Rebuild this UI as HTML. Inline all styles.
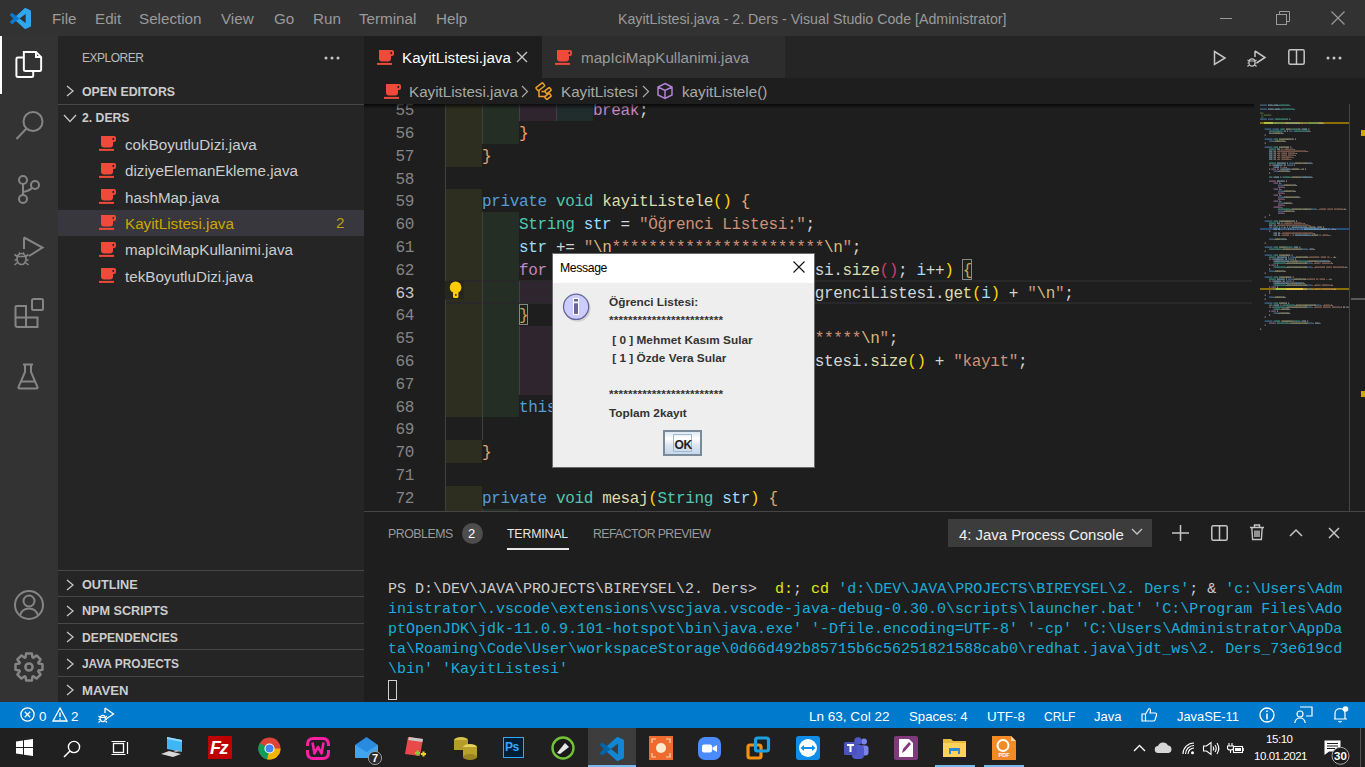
<!DOCTYPE html><html><head><meta charset="utf-8"><style>
*{margin:0;padding:0;box-sizing:border-box}
html,body{width:1365px;height:767px;overflow:hidden;background:#1e1e1e;font-family:"Liberation Sans",sans-serif}
.a{position:absolute}
.t{position:absolute;white-space:pre;line-height:1}
svg{position:absolute;overflow:visible}
.m{color:#9a9a9a;font-size:15.2px;top:11px}
.code{position:absolute;font-family:"Liberation Mono",monospace;font-size:16px;letter-spacing:-0.36px;white-space:pre;line-height:22.8px;color:#d4d4d4}
.ln{position:absolute;font-family:"Liberation Mono",monospace;font-size:16px;letter-spacing:-0.36px;white-space:pre;line-height:22.8px;color:#858585;text-align:right;width:50px;left:364px}
.fn{font-size:15.2px;color:#cccccc}
.hd{font-size:13.4px;font-weight:bold;color:#cccccc;transform-origin:0 0}
</style></head><body><div class="a" style="left:0;top:0;width:1365px;height:36px;background:#323232"><svg style="left:10px;top:8px" width="21" height="21" viewBox="0 0 100 100">
<path fill="#0a7bd0" d="M96.5 10.8 75.9.9a6.2 6.2 0 0 0-7.1 1.2L29.4 38 12.2 25a4.2 4.2 0 0 0-5.3.2L1.4 30.2a4.2 4.2 0 0 0 0 6.2L16.3 50 1.4 63.6a4.2 4.2 0 0 0 0 6.2l5.5 5a4.2 4.2 0 0 0 5.3.2l17.2-13 39.4 35.9a6.2 6.2 0 0 0 7.1 1.2l20.6-9.9a6.2 6.2 0 0 0 3.5-5.6V16.4a6.2 6.2 0 0 0-3.5-5.6zM75 72.7 45.1 50 75 27.3z"/>
<path fill="#3cb4f8" d="M75.9.9a6.2 6.2 0 0 0-7.1 1.2L29.4 38 45.1 50 75 27.3v45.4L45.1 50 29.4 62l39.4 35.9a6.2 6.2 0 0 0 7.1 1.2l20.6-9.9a6.2 6.2 0 0 0 3.5-5.6V16.4a6.2 6.2 0 0 0-3.5-5.6z" opacity=".75"/>
</svg><div class="t m" style="left:52px">File</div><div class="t m" style="left:95px">Edit</div><div class="t m" style="left:139px">Selection</div><div class="t m" style="left:221px">View</div><div class="t m" style="left:274px">Go</div><div class="t m" style="left:313px">Run</div><div class="t m" style="left:359px">Terminal</div><div class="t m" style="left:436px">Help</div><div class="t m" style="left:618px;font-size:14.2px;top:12px">KayitListesi.java - 2. Ders - Visual Studio Code [Administrator]</div><div class="a" style="left:1220px;top:18px;width:12px;height:1px;background:#9a9a9a"></div><svg style="left:1276px;top:11px" width="14" height="14"><rect x="0.5" y="3.5" width="10" height="10" fill="none" stroke="#9a9a9a"/><path d="M3.5 3.5V0.5H13.5V10.5H10.5" fill="none" stroke="#9a9a9a"/></svg><svg style="left:1331px;top:11px" width="14" height="14"><path d="M0.5 0.5L13.5 13.5M13.5 0.5L0.5 13.5" stroke="#9a9a9a" stroke-width="1.2"/></svg></div><div class="a" style="left:0;top:36px;width:58px;height:666px;background:#333333"></div><div class="a" style="left:0;top:36px;width:2px;height:58px;background:#ffffff"></div><svg style="left:15px;top:50px" width="28" height="29" viewBox="0 0 30 30" fill="none" stroke="#ffffff" stroke-width="2.1">
<rect x="1.5" y="7.5" width="18" height="21" rx="1.5"/>
<path d="M9.5 1.5H22.5L28 7V20.5Q28 22 26.5 22H11Q9.5 22 9.5 20.5Z" fill="#333333"/>
<path d="M22.5 1.5V7H28"/>
</svg><svg style="left:14px;top:108px" width="30" height="30" viewBox="0 0 30 30" fill="none" stroke="#858585" stroke-width="2">
<circle cx="19" cy="13.5" r="9.5"/><path d="M12.5 20.5L2.5 31"/>
</svg><svg style="left:14px;top:166px" width="30" height="30" viewBox="0 0 30 30" fill="none" stroke="#858585" stroke-width="2">
<circle cx="9" cy="14" r="4"/><circle cx="9" cy="33" r="4"/><circle cx="21" cy="19" r="4"/>
<path d="M9 18V29M18 22Q15 25 9 26"/>
</svg><svg style="left:14px;top:236px" width="30" height="30" viewBox="0 0 30 30" fill="none" stroke="#858585" stroke-width="2">
<path d="M10 1.5L28.5 11.5L15 20M10 1.5V13"/>
<g stroke-width="1.6"><ellipse cx="7.5" cy="23" rx="4.5" ry="5.5" fill="#333"/><path d="M3.5 20.5H11.5M0.5 18.5L3.5 20.5M14.5 18.5L11.5 20.5M0.5 24H3M12 24H14.5M0.5 29L3.5 26.5M14.5 29L11.5 26.5M5 16.5L6 18M10 16.5L9 18"/></g>
</svg><svg style="left:14px;top:298px" width="30" height="30" viewBox="0 0 30 30" fill="none" stroke="#858585" stroke-width="2">
<path d="M2.5 8H12V19.5H23.5V29H3.5Q1.5 29 1.5 27V9Q1.5 8 2.5 8ZM1.5 19.5H12V29"/>
<rect x="18" y="1" width="11" height="11" rx="1.5"/>
</svg><svg style="left:14px;top:362px" width="30" height="30" viewBox="0 0 30 30" fill="none" stroke="#858585" stroke-width="2">
<path d="M9 2.5H19M11 2.5V10L4.5 25Q4 26.5 5.5 26.5H22.5Q24 26.5 23.5 25L17 10V2.5M7.5 19.5H20.5"/>
</svg><svg style="left:14px;top:590px" width="30" height="30" viewBox="0 0 30 30" fill="none" stroke="#858585" stroke-width="2">
<circle cx="15" cy="15" r="14"/><circle cx="15" cy="11" r="5.5"/><path d="M6 25.5Q8 18.5 15 18.5Q22 18.5 24 25.5"/>
</svg><svg style="left:14px;top:652px" width="30" height="30" viewBox="0 0 30 30" fill="none" stroke="#858585" stroke-width="2.5">
<path d="M11.10 5.58L11.51 5.42L12.13 1.50L17.87 1.50L18.49 5.42L18.90 5.58L19.31 5.76L22.52 3.43L26.57 7.48L24.24 10.69L24.42 11.10L24.58 11.51L28.50 12.13L28.50 17.87L24.58 18.49L24.42 18.90L24.24 19.31L26.57 22.52L22.52 26.57L19.31 24.24L18.90 24.42L18.49 24.58L17.87 28.50L12.13 28.50L11.51 24.58L11.10 24.42L10.69 24.24L7.48 26.57L3.43 22.52L5.76 19.31L5.58 18.90L5.42 18.49L1.50 17.87L1.50 12.13L5.42 11.51L5.58 11.10L5.76 10.69L3.43 7.48L7.48 3.43L10.69 5.76Z" stroke-linejoin="round"/>
<circle cx="15" cy="15" r="3.6"/>
</svg><div class="a" style="left:58px;top:36px;width:306px;height:666px;background:#252526"></div><div class="t" style="left:82px;top:52px;font-size:12px;color:#bbbbbb;letter-spacing:-0.5px">EXPLORER</div><svg style="left:324px;top:56px" width="18" height="4"><circle cx="2" cy="2" r="1.5" fill="#c5c5c5"/><circle cx="8" cy="2" r="1.5" fill="#c5c5c5"/><circle cx="14" cy="2" r="1.5" fill="#c5c5c5"/></svg><svg style="left:65px;top:83.5px" width="12" height="14"><path d="M2 2L8 7L2 12" fill="none" stroke="#c5c5c5" stroke-width="1.3"/></svg><div class="t hd" style="left:82px;top:84.5px;transform:scaleX(0.922)">OPEN EDITORS</div><div class="a" style="left:58px;top:104px;width:306px;height:1px;background:#474747"></div><svg style="left:63px;top:113px" width="14" height="12"><path d="M1 2L7 8.5L13 2" fill="none" stroke="#c5c5c5" stroke-width="1.3"/></svg><div class="t hd" style="left:82px;top:111px;transform:scaleX(0.912)">2. DERS</div><svg style="left:99px;top:136.1px" width="17" height="15" viewBox="0 0 17 15"><path fill="#ef4a3a" d="M2 0H14V8.6Q14 11.6 11 11.6H5Q2 11.6 2 8.6Z"/><path fill="#ef4a3a" d="M13 0H15Q17 0 17 2V4Q17 6 15 6H13Z"/><ellipse cx="14.3" cy="3" rx="0.9" ry="1.3" fill="#252526"/><rect x="0" y="12.9" width="15" height="2" fill="#ef4a3a"/></svg><div class="t fn" style="left:125px;top:136.8px">cokBoyutluDizi.java</div><svg style="left:99px;top:162.5px" width="17" height="15" viewBox="0 0 17 15"><path fill="#ef4a3a" d="M2 0H14V8.6Q14 11.6 11 11.6H5Q2 11.6 2 8.6Z"/><path fill="#ef4a3a" d="M13 0H15Q17 0 17 2V4Q17 6 15 6H13Z"/><ellipse cx="14.3" cy="3" rx="0.9" ry="1.3" fill="#252526"/><rect x="0" y="12.9" width="15" height="2" fill="#ef4a3a"/></svg><div class="t fn" style="left:125px;top:163.2px">diziyeElemanEkleme.java</div><svg style="left:99px;top:188.9px" width="17" height="15" viewBox="0 0 17 15"><path fill="#ef4a3a" d="M2 0H14V8.6Q14 11.6 11 11.6H5Q2 11.6 2 8.6Z"/><path fill="#ef4a3a" d="M13 0H15Q17 0 17 2V4Q17 6 15 6H13Z"/><ellipse cx="14.3" cy="3" rx="0.9" ry="1.3" fill="#252526"/><rect x="0" y="12.9" width="15" height="2" fill="#ef4a3a"/></svg><div class="t fn" style="left:125px;top:189.6px">hashMap.java</div><div class="a" style="left:58px;top:210.0px;width:306px;height:26.4px;background:#37373d"></div><svg style="left:99px;top:215.3px" width="17" height="15" viewBox="0 0 17 15"><path fill="#ef4a3a" d="M2 0H14V8.6Q14 11.6 11 11.6H5Q2 11.6 2 8.6Z"/><path fill="#ef4a3a" d="M13 0H15Q17 0 17 2V4Q17 6 15 6H13Z"/><ellipse cx="14.3" cy="3" rx="0.9" ry="1.3" fill="#37373d"/><rect x="0" y="12.9" width="15" height="2" fill="#ef4a3a"/></svg><div class="t fn" style="left:125px;top:216.0px;color:#cca700">KayitListesi.java</div><div class="t fn" style="left:336px;top:215.0px;color:#c09e10">2</div><svg style="left:99px;top:241.7px" width="17" height="15" viewBox="0 0 17 15"><path fill="#ef4a3a" d="M2 0H14V8.6Q14 11.6 11 11.6H5Q2 11.6 2 8.6Z"/><path fill="#ef4a3a" d="M13 0H15Q17 0 17 2V4Q17 6 15 6H13Z"/><ellipse cx="14.3" cy="3" rx="0.9" ry="1.3" fill="#252526"/><rect x="0" y="12.9" width="15" height="2" fill="#ef4a3a"/></svg><div class="t fn" style="left:125px;top:242.4px">mapIciMapKullanimi.java</div><svg style="left:99px;top:268.1px" width="17" height="15" viewBox="0 0 17 15"><path fill="#ef4a3a" d="M2 0H14V8.6Q14 11.6 11 11.6H5Q2 11.6 2 8.6Z"/><path fill="#ef4a3a" d="M13 0H15Q17 0 17 2V4Q17 6 15 6H13Z"/><ellipse cx="14.3" cy="3" rx="0.9" ry="1.3" fill="#252526"/><rect x="0" y="12.9" width="15" height="2" fill="#ef4a3a"/></svg><div class="t fn" style="left:125px;top:268.8px">tekBoyutluDizi.java</div><div class="a" style="left:58px;top:570.0px;width:306px;height:1px;background:#474747"></div><svg style="left:65px;top:577.5px" width="12" height="14"><path d="M2 2L8 7L2 12" fill="none" stroke="#c5c5c5" stroke-width="1.3"/></svg><div class="t hd" style="left:82px;top:578.0px;transform:scaleX(0.947)">OUTLINE</div><div class="a" style="left:58px;top:596.4px;width:306px;height:1px;background:#474747"></div><svg style="left:65px;top:603.9px" width="12" height="14"><path d="M2 2L8 7L2 12" fill="none" stroke="#c5c5c5" stroke-width="1.3"/></svg><div class="t hd" style="left:82px;top:604.4px;transform:scaleX(0.943)">NPM SCRIPTS</div><div class="a" style="left:58px;top:622.8px;width:306px;height:1px;background:#474747"></div><svg style="left:65px;top:630.3px" width="12" height="14"><path d="M2 2L8 7L2 12" fill="none" stroke="#c5c5c5" stroke-width="1.3"/></svg><div class="t hd" style="left:82px;top:630.8px;transform:scaleX(0.908)">DEPENDENCIES</div><div class="a" style="left:58px;top:649.2px;width:306px;height:1px;background:#474747"></div><svg style="left:65px;top:656.7px" width="12" height="14"><path d="M2 2L8 7L2 12" fill="none" stroke="#c5c5c5" stroke-width="1.3"/></svg><div class="t hd" style="left:82px;top:657.2px;transform:scaleX(0.888)">JAVA PROJECTS</div><div class="a" style="left:58px;top:675.6px;width:306px;height:1px;background:#474747"></div><svg style="left:65px;top:683.1px" width="12" height="14"><path d="M2 2L8 7L2 12" fill="none" stroke="#c5c5c5" stroke-width="1.3"/></svg><div class="t hd" style="left:82px;top:683.6px;transform:scaleX(0.981)">MAVEN</div><div class="a" style="left:364px;top:36px;width:1001px;height:42px;background:#252526"></div><div class="a" style="left:364px;top:36px;width:178px;height:42px;background:#1e1e1e"></div><div class="a" style="left:542px;top:36px;width:243px;height:42px;background:#2d2d2d"></div><svg style="left:377px;top:50px" width="17" height="15" viewBox="0 0 17 15"><path fill="#ef4a3a" d="M2 0H14V8.6Q14 11.6 11 11.6H5Q2 11.6 2 8.6Z"/><path fill="#ef4a3a" d="M13 0H15Q17 0 17 2V4Q17 6 15 6H13Z"/><ellipse cx="14.3" cy="3" rx="0.9" ry="1.3" fill="#1e1e1e"/><rect x="0" y="12.9" width="15" height="2" fill="#ef4a3a"/></svg><div class="t fn" style="left:402px;top:50px;color:#ffffff">KayitListesi.java</div><svg style="left:516px;top:51px" width="12" height="12"><path d="M1 1L11 11M11 1L1 11" stroke="#c5c5c5" stroke-width="1.4"/></svg><svg style="left:555px;top:50px" width="17" height="15" viewBox="0 0 17 15"><path fill="#ef4a3a" d="M2 0H14V8.6Q14 11.6 11 11.6H5Q2 11.6 2 8.6Z"/><path fill="#ef4a3a" d="M13 0H15Q17 0 17 2V4Q17 6 15 6H13Z"/><ellipse cx="14.3" cy="3" rx="0.9" ry="1.3" fill="#2d2d2d"/><rect x="0" y="12.9" width="15" height="2" fill="#ef4a3a"/></svg><div class="t fn" style="left:581px;top:50px;color:#9a9a9a">mapIciMapKullanimi.java</div><svg style="left:1213px;top:50px" width="14" height="16"><path d="M1.5 1.5L12 8L1.5 14.5Z" fill="none" stroke="#c5c5c5" stroke-width="1.5"/></svg><svg style="left:1247px;top:50px" width="20" height="18"><path d="M8 1L18 7.5L9.5 13M8 1V7" fill="none" stroke="#c5c5c5" stroke-width="1.5"/><g fill="none" stroke="#c5c5c5" stroke-width="1.2"><ellipse cx="5" cy="12.5" rx="3" ry="3.6" fill="#252526"/><path d="M2.2 11H7.8M0.5 10L2.2 11M9.5 10L7.8 11M0.5 13H2M8 13H9.5M0.5 16.5L2.2 14.8M9.5 16.5L7.8 14.8"/></g></svg><svg style="left:1288px;top:49px" width="17" height="16"><rect x="0.8" y="0.8" width="15.4" height="14.4" rx="1.5" fill="none" stroke="#c5c5c5" stroke-width="1.5"/><path d="M8.5 1V15" stroke="#c5c5c5" stroke-width="1.5"/></svg><svg style="left:1326px;top:56px" width="18" height="4"><circle cx="2" cy="2" r="1.5" fill="#c5c5c5"/><circle cx="8" cy="2" r="1.5" fill="#c5c5c5"/><circle cx="14" cy="2" r="1.5" fill="#c5c5c5"/></svg><div class="a" style="left:364px;top:78px;width:1001px;height:26.4px;background:#1e1e1e"></div><svg style="left:384px;top:84px" width="17" height="15" viewBox="0 0 17 15"><path fill="#ef4a3a" d="M2 0H14V8.6Q14 11.6 11 11.6H5Q2 11.6 2 8.6Z"/><path fill="#ef4a3a" d="M13 0H15Q17 0 17 2V4Q17 6 15 6H13Z"/><ellipse cx="14.3" cy="3" rx="0.9" ry="1.3" fill="#1e1e1e"/><rect x="0" y="12.9" width="15" height="2" fill="#ef4a3a"/></svg><div class="t fn" style="left:409px;top:84px;color:#a9a9a9">KayitListesi.java</div><svg style="left:521px;top:85px" width="8" height="13"><path d="M1 1L6.5 6.5L1 12" fill="none" stroke="#a9a9a9" stroke-width="1.2"/></svg><svg style="left:534px;top:82px" width="19" height="19" viewBox="0 0 19 19" fill="none" stroke="#ee9d28" stroke-width="1.5"><rect x="2" y="2.8" width="8.6" height="4" rx="0.8" transform="rotate(-38 6.3 4.8)"/><rect x="11" y="6.8" width="6" height="3.6" rx="0.8" transform="rotate(-38 14 8.6)"/><rect x="11" y="12.6" width="6" height="3.6" rx="0.8" transform="rotate(-38 14 14.4)"/><path d="M5 7.5V14.5H11.5M7.5 9.5H11.5"/></svg><div class="t fn" style="left:561px;top:84px;color:#a9a9a9">KayitListesi</div><svg style="left:642px;top:85px" width="8" height="13"><path d="M1 1L6.5 6.5L1 12" fill="none" stroke="#a9a9a9" stroke-width="1.2"/></svg><svg style="left:656px;top:82px" width="18" height="18" viewBox="0 0 18 18" fill="none" stroke="#b180d7" stroke-width="1.5"><path d="M9 1.5L16 5V13L9 16.5L2 13V5Z M2 5L9 8.5L16 5 M9 8.5V16.5"/></svg><div class="t fn" style="left:682px;top:84px;color:#a9a9a9">kayitListele()</div><div class="a" style="left:364px;top:104px;width:1001px;height:408px;overflow:hidden"><div class="a" style="left:81.00px;top:-5.80px;width:36.96px;height:22.8px;background:#2e2e20"></div><div class="a" style="left:117.96px;top:-5.80px;width:36.96px;height:22.8px;background:#252e25"></div><div class="a" style="left:154.92px;top:-5.80px;width:36.96px;height:22.8px;background:#2e252e"></div><div class="a" style="left:191.88px;top:-5.80px;width:36.96px;height:22.8px;background:#212c2c"></div><div class="a" style="left:81.00px;top:17.00px;width:36.96px;height:22.8px;background:#2e2e20"></div><div class="a" style="left:117.96px;top:17.00px;width:36.96px;height:22.8px;background:#252e25"></div><div class="a" style="left:81.00px;top:39.80px;width:36.96px;height:22.8px;background:#2e2e20"></div><div class="a" style="left:81.00px;top:85.40px;width:36.96px;height:22.8px;background:#2e2e20"></div><div class="a" style="left:81.00px;top:108.20px;width:36.96px;height:22.8px;background:#2e2e20"></div><div class="a" style="left:117.96px;top:108.20px;width:36.96px;height:22.8px;background:#252e25"></div><div class="a" style="left:81.00px;top:131.00px;width:36.96px;height:22.8px;background:#2e2e20"></div><div class="a" style="left:117.96px;top:131.00px;width:36.96px;height:22.8px;background:#252e25"></div><div class="a" style="left:81.00px;top:153.80px;width:36.96px;height:22.8px;background:#2e2e20"></div><div class="a" style="left:117.96px;top:153.80px;width:36.96px;height:22.8px;background:#252e25"></div><div class="a" style="left:81.00px;top:176.60px;width:36.96px;height:22.8px;background:#2e2e20"></div><div class="a" style="left:117.96px;top:176.60px;width:36.96px;height:22.8px;background:#252e25"></div><div class="a" style="left:154.92px;top:176.60px;width:36.96px;height:22.8px;background:#2e252e"></div><div class="a" style="left:81.00px;top:199.40px;width:36.96px;height:22.8px;background:#2e2e20"></div><div class="a" style="left:117.96px;top:199.40px;width:36.96px;height:22.8px;background:#252e25"></div><div class="a" style="left:81.00px;top:222.20px;width:36.96px;height:22.8px;background:#2e2e20"></div><div class="a" style="left:117.96px;top:222.20px;width:36.96px;height:22.8px;background:#252e25"></div><div class="a" style="left:154.92px;top:222.20px;width:36.96px;height:22.8px;background:#2e252e"></div><div class="a" style="left:81.00px;top:245.00px;width:36.96px;height:22.8px;background:#2e2e20"></div><div class="a" style="left:117.96px;top:245.00px;width:36.96px;height:22.8px;background:#252e25"></div><div class="a" style="left:154.92px;top:245.00px;width:36.96px;height:22.8px;background:#2e252e"></div><div class="a" style="left:81.00px;top:267.80px;width:36.96px;height:22.8px;background:#2e2e20"></div><div class="a" style="left:117.96px;top:267.80px;width:36.96px;height:22.8px;background:#252e25"></div><div class="a" style="left:154.92px;top:267.80px;width:36.96px;height:22.8px;background:#2e252e"></div><div class="a" style="left:81.00px;top:290.60px;width:36.96px;height:22.8px;background:#2e2e20"></div><div class="a" style="left:117.96px;top:290.60px;width:36.96px;height:22.8px;background:#252e25"></div><div class="a" style="left:81.00px;top:336.20px;width:36.96px;height:22.8px;background:#2e2e20"></div><div class="a" style="left:81.00px;top:381.80px;width:36.96px;height:22.8px;background:#2e2e20"></div><div class="a" style="left:81.00px;top:404.60px;width:36.96px;height:22.8px;background:#2e2e20"></div><div class="a" style="left:117.96px;top:404.60px;width:36.96px;height:22.8px;background:#252e25"></div><div class="a" style="left:81px;top:175.60px;width:807px;height:24.8px;border-top:2px solid #282828;border-bottom:2px solid #282828"></div><div class="a" style="left:81.00px;top:-5.80px;width:1px;height:22.8px;background:#404040"></div><div class="a" style="left:117.96px;top:-5.80px;width:1px;height:22.8px;background:#404040"></div><div class="a" style="left:154.92px;top:-5.80px;width:1px;height:22.8px;background:#404040"></div><div class="a" style="left:191.88px;top:-5.80px;width:1px;height:22.8px;background:#404040"></div><div class="a" style="left:81.00px;top:17.00px;width:1px;height:22.8px;background:#404040"></div><div class="a" style="left:117.96px;top:17.00px;width:1px;height:22.8px;background:#404040"></div><div class="a" style="left:81.00px;top:39.80px;width:1px;height:22.8px;background:#404040"></div><div class="a" style="left:81.00px;top:62.60px;width:1px;height:22.8px;background:#404040"></div><div class="a" style="left:81.00px;top:85.40px;width:1px;height:22.8px;background:#404040"></div><div class="a" style="left:81.00px;top:108.20px;width:1px;height:22.8px;background:#404040"></div><div class="a" style="left:117.96px;top:108.20px;width:1px;height:22.8px;background:#404040"></div><div class="a" style="left:81.00px;top:131.00px;width:1px;height:22.8px;background:#404040"></div><div class="a" style="left:117.96px;top:131.00px;width:1px;height:22.8px;background:#404040"></div><div class="a" style="left:81.00px;top:153.80px;width:1px;height:22.8px;background:#404040"></div><div class="a" style="left:117.96px;top:153.80px;width:1px;height:22.8px;background:#404040"></div><div class="a" style="left:81.00px;top:176.60px;width:1px;height:22.8px;background:#404040"></div><div class="a" style="left:117.96px;top:176.60px;width:1px;height:22.8px;background:#404040"></div><div class="a" style="left:154.92px;top:176.60px;width:1px;height:22.8px;background:#404040"></div><div class="a" style="left:81.00px;top:199.40px;width:1px;height:22.8px;background:#404040"></div><div class="a" style="left:117.96px;top:199.40px;width:1px;height:22.8px;background:#404040"></div><div class="a" style="left:81.00px;top:222.20px;width:1px;height:22.8px;background:#404040"></div><div class="a" style="left:117.96px;top:222.20px;width:1px;height:22.8px;background:#404040"></div><div class="a" style="left:154.92px;top:222.20px;width:1px;height:22.8px;background:#404040"></div><div class="a" style="left:81.00px;top:245.00px;width:1px;height:22.8px;background:#404040"></div><div class="a" style="left:117.96px;top:245.00px;width:1px;height:22.8px;background:#404040"></div><div class="a" style="left:154.92px;top:245.00px;width:1px;height:22.8px;background:#404040"></div><div class="a" style="left:81.00px;top:267.80px;width:1px;height:22.8px;background:#404040"></div><div class="a" style="left:117.96px;top:267.80px;width:1px;height:22.8px;background:#404040"></div><div class="a" style="left:154.92px;top:267.80px;width:1px;height:22.8px;background:#404040"></div><div class="a" style="left:81.00px;top:290.60px;width:1px;height:22.8px;background:#404040"></div><div class="a" style="left:117.96px;top:290.60px;width:1px;height:22.8px;background:#404040"></div><div class="a" style="left:81.00px;top:313.40px;width:1px;height:22.8px;background:#404040"></div><div class="a" style="left:117.96px;top:313.40px;width:1px;height:22.8px;background:#404040"></div><div class="a" style="left:81.00px;top:336.20px;width:1px;height:22.8px;background:#404040"></div><div class="a" style="left:81.00px;top:359.00px;width:1px;height:22.8px;background:#404040"></div><div class="a" style="left:81.00px;top:381.80px;width:1px;height:22.8px;background:#404040"></div><div class="a" style="left:81.00px;top:404.60px;width:1px;height:22.8px;background:#404040"></div><div class="a" style="left:117.96px;top:404.60px;width:1px;height:22.8px;background:#404040"></div><div class="ln" style="left:0px;top:-3.80px;color:#858585">55</div><div class="code" style="left:81px;top:-3.80px"><span style="color:#d4d4d4">                </span><span style="color:#c586c0">break</span><span style="color:#d4d4d4">;</span></div><div class="ln" style="left:0px;top:19.00px;color:#858585">56</div><div class="code" style="left:81px;top:19.00px"><span style="color:#d4d4d4">        </span><span style="color:#e8a56a">}</span></div><div class="ln" style="left:0px;top:41.80px;color:#858585">57</div><div class="code" style="left:81px;top:41.80px"><span style="color:#d4d4d4">    </span><span style="color:#e8a56a">}</span></div><div class="ln" style="left:0px;top:64.60px;color:#858585">58</div><div class="ln" style="left:0px;top:87.40px;color:#858585">59</div><div class="code" style="left:81px;top:87.40px"><span style="color:#d4d4d4">    </span><span style="color:#569cd6">private</span><span style="color:#d4d4d4"> </span><span style="color:#4ec9b0">void</span><span style="color:#d4d4d4"> </span><span style="color:#dcdcaa">kayitListele</span><span style="color:#ffd700">()</span><span style="color:#d4d4d4"> </span><span style="color:#e8a56a">{</span></div><div class="ln" style="left:0px;top:110.20px;color:#858585">60</div><div class="code" style="left:81px;top:110.20px"><span style="color:#d4d4d4">        </span><span style="color:#4ec9b0">String</span><span style="color:#d4d4d4"> </span><span style="color:#9cdcfe">str</span><span style="color:#d4d4d4"> = </span><span style="color:#ce9178">&quot;Öğrenci Listesi:&quot;</span><span style="color:#d4d4d4">;</span></div><div class="ln" style="left:0px;top:133.00px;color:#858585">61</div><div class="code" style="left:81px;top:133.00px"><span style="color:#d4d4d4">        </span><span style="color:#9cdcfe">str</span><span style="color:#d4d4d4"> += </span><span style="color:#ce9178">&quot;</span><span style="color:#d7ba7d">\n</span><span style="color:#ce9178">***********************</span><span style="color:#d7ba7d">\n</span><span style="color:#ce9178">&quot;</span><span style="color:#d4d4d4">;</span></div><div class="ln" style="left:0px;top:155.80px;color:#858585">62</div><div class="code" style="left:81px;top:155.80px"><span style="color:#d4d4d4">        </span><span style="color:#c586c0">for</span><span style="color:#d4d4d4"> </span><span style="color:#ffd700">(</span><span style="color:#4ec9b0">int</span><span style="color:#d4d4d4"> </span><span style="color:#9cdcfe">i</span><span style="color:#d4d4d4"> = </span><span style="color:#b5cea8">0</span><span style="color:#d4d4d4">; </span><span style="color:#9cdcfe">i</span><span style="color:#d4d4d4"> &lt; </span><span style="color:#d4d4d4">ogrenciListesi</span><span style="color:#d4d4d4">.</span><span style="color:#dcdcaa">size</span><span style="color:#d23a73">()</span><span style="color:#d4d4d4">; </span><span style="color:#9cdcfe">i</span><span style="color:#d4d4d4">++</span><span style="color:#ffd700">)</span><span style="color:#d4d4d4"> </span><span style="color:#e8a56a">{</span></div><div class="ln" style="left:0px;top:178.60px;color:#c6c6c6">63</div><div class="code" style="left:81px;top:178.60px"><span style="color:#d4d4d4">            </span><span style="color:#9cdcfe">str</span><span style="color:#d4d4d4"> += </span><span style="color:#ce9178">&quot; [ &quot;</span><span style="color:#d4d4d4"> + </span><span style="color:#9cdcfe">i</span><span style="color:#d4d4d4"> + </span><span style="color:#ce9178">&quot; ] &quot;</span><span style="color:#d4d4d4"> + </span><span style="color:#d4d4d4">ogrenciListesi</span><span style="color:#d4d4d4">.</span><span style="color:#dcdcaa">get</span><span style="color:#ffd700">(</span><span style="color:#9cdcfe">i</span><span style="color:#ffd700">)</span><span style="color:#d4d4d4"> + </span><span style="color:#ce9178">&quot;</span><span style="color:#d7ba7d">\n</span><span style="color:#ce9178">&quot;</span><span style="color:#d4d4d4">;</span></div><div class="ln" style="left:0px;top:201.40px;color:#858585">64</div><div class="code" style="left:81px;top:201.40px"><span style="color:#d4d4d4">        </span><span style="color:#e8a56a">}</span></div><div class="ln" style="left:0px;top:224.20px;color:#858585">65</div><div class="code" style="left:81px;top:224.20px"><span style="color:#d4d4d4">            </span><span style="color:#9cdcfe">str</span><span style="color:#d4d4d4"> += </span><span style="color:#ce9178">&quot;</span><span style="color:#d7ba7d">\n</span><span style="color:#ce9178">***********************</span><span style="color:#d7ba7d">\n</span><span style="color:#ce9178">&quot;</span><span style="color:#d4d4d4">;</span></div><div class="ln" style="left:0px;top:247.00px;color:#858585">66</div><div class="code" style="left:81px;top:247.00px"><span style="color:#d4d4d4">            </span><span style="color:#9cdcfe">str</span><span style="color:#d4d4d4"> += </span><span style="color:#ce9178">&quot;Toplam &quot;</span><span style="color:#d4d4d4"> + </span><span style="color:#d4d4d4">ogrenciListesi</span><span style="color:#d4d4d4">.</span><span style="color:#dcdcaa">size</span><span style="color:#ffd700">()</span><span style="color:#d4d4d4"> + </span><span style="color:#ce9178">&quot;kayıt&quot;</span><span style="color:#d4d4d4">;</span></div><div class="ln" style="left:0px;top:269.80px;color:#858585">67</div><div class="ln" style="left:0px;top:292.60px;color:#858585">68</div><div class="code" style="left:81px;top:292.60px"><span style="color:#d4d4d4">        </span><span style="color:#569cd6">this</span><span style="color:#d4d4d4">.</span><span style="color:#dcdcaa">mesaj</span><span style="color:#ffd700">(</span><span style="color:#9cdcfe">str</span><span style="color:#ffd700">)</span><span style="color:#d4d4d4">;</span></div><div class="ln" style="left:0px;top:315.40px;color:#858585">69</div><div class="ln" style="left:0px;top:338.20px;color:#858585">70</div><div class="code" style="left:81px;top:338.20px"><span style="color:#d4d4d4">    </span><span style="color:#e8a56a">}</span></div><div class="ln" style="left:0px;top:361.00px;color:#858585">71</div><div class="ln" style="left:0px;top:383.80px;color:#858585">72</div><div class="code" style="left:81px;top:383.80px"><span style="color:#d4d4d4">    </span><span style="color:#569cd6">private</span><span style="color:#d4d4d4"> </span><span style="color:#4ec9b0">void</span><span style="color:#d4d4d4"> </span><span style="color:#dcdcaa">mesaj</span><span style="color:#ffd700">(</span><span style="color:#4ec9b0">String</span><span style="color:#d4d4d4"> </span><span style="color:#9cdcfe">str</span><span style="color:#ffd700">)</span><span style="color:#d4d4d4"> </span><span style="color:#e8a56a">{</span></div><div class="ln" style="left:0px;top:406.60px;color:#858585">73</div><div class="code" style="left:81px;top:406.60px"><span style="color:#d4d4d4">        </span><span style="color:#4ec9b0">JOptionPane</span><span style="color:#d4d4d4">.</span><span style="color:#dcdcaa">showMessageDialog</span><span style="color:#ffd700">(</span><span style="color:#569cd6">null</span><span style="color:#d4d4d4">, </span><span style="color:#9cdcfe">str</span><span style="color:#ffd700">)</span><span style="color:#d4d4d4">;</span></div><div class="a" style="left:598.44px;top:154.80px;width:9.24px;height:20.8px;border:1px solid #888888;background:rgba(0,100,0,0.1)"></div><div class="a" style="left:154.92px;top:200.40px;width:9.24px;height:20.8px;border:1px solid #888888;background:rgba(0,100,0,0.1)"></div><svg style="left:81px;top:177px" width="19" height="19" viewBox="0 0 19 19"><rect width="18.6" height="18.4" fill="#26261f"/><circle cx="10.6" cy="6.4" r="5.8" fill="#ffcc00"/><rect x="8" y="9" width="5.4" height="8" rx="1.6" fill="#ffcc00"/><rect x="10" y="13.2" width="1.6" height="1.6" fill="#26261f"/></svg></div><div class="a" style="left:364px;top:104px;width:890px;height:5px;background:linear-gradient(rgba(0,0,0,0.7),rgba(0,0,0,0))"></div><div class="a" style="left:1258px;top:104px;width:93px;height:408px;background:#1e1e1e"></div><div class="a" style="left:1260px;top:122.0px;width:89px;height:2px;background:#8c6f07"></div><div class="a" style="left:1264px;top:122.0px;width:9px;height:2px;background:#e8b900"></div><div class="a" style="left:1260px;top:228.0px;width:89px;height:2px;background:#264f78"></div><div class="a" style="left:1260px;top:288.0px;width:89px;height:2px;background:#8c6f07"></div><div class="a" style="left:1276px;top:288.0px;width:27px;height:2px;background:#e8b900"></div><svg style="left:0;top:0" width="1365" height="767" viewBox="0 0 1365 767"><g opacity="0.72"><path fill="#569cd6" d="M1260.2 104.4h0.95v1.4h-0.95zM1261.3 104.4h0.95v1.4h-0.95zM1262.4 104.4h0.95v1.4h-0.95zM1263.6 104.4h0.95v1.4h-0.95zM1264.7 104.4h0.95v1.4h-0.95zM1265.8 104.4h0.95v1.4h-0.95zM1260.2 108.4h0.95v1.4h-0.95zM1261.3 108.4h0.95v1.4h-0.95zM1262.4 108.4h0.95v1.4h-0.95zM1263.6 108.4h0.95v1.4h-0.95zM1264.7 108.4h0.95v1.4h-0.95zM1265.8 108.4h0.95v1.4h-0.95zM1260.2 118.4h0.95v1.4h-0.95zM1261.3 118.4h0.95v1.4h-0.95zM1262.4 118.4h0.95v1.4h-0.95zM1263.6 118.4h0.95v1.4h-0.95zM1264.7 118.4h0.95v1.4h-0.95zM1265.8 118.4h0.95v1.4h-0.95zM1268.0 118.4h0.95v1.4h-0.95zM1269.2 118.4h0.95v1.4h-0.95zM1270.3 118.4h0.95v1.4h-0.95zM1271.4 118.4h0.95v1.4h-0.95zM1272.5 118.4h0.95v1.4h-0.95zM1303.9 122.4h0.95v1.4h-0.95zM1305.0 122.4h0.95v1.4h-0.95zM1306.1 122.4h0.95v1.4h-0.95zM1264.7 128.4h0.95v1.4h-0.95zM1265.8 128.4h0.95v1.4h-0.95zM1266.9 128.4h0.95v1.4h-0.95zM1268.0 128.4h0.95v1.4h-0.95zM1269.2 128.4h0.95v1.4h-0.95zM1270.3 128.4h0.95v1.4h-0.95zM1272.5 128.4h0.95v1.4h-0.95zM1273.6 128.4h0.95v1.4h-0.95zM1274.8 128.4h0.95v1.4h-0.95zM1275.9 128.4h0.95v1.4h-0.95zM1277.0 128.4h0.95v1.4h-0.95zM1278.1 128.4h0.95v1.4h-0.95zM1289.3 130.4h0.95v1.4h-0.95zM1290.4 130.4h0.95v1.4h-0.95zM1291.6 130.4h0.95v1.4h-0.95zM1264.7 138.4h0.95v1.4h-0.95zM1265.8 138.4h0.95v1.4h-0.95zM1266.9 138.4h0.95v1.4h-0.95zM1268.0 138.4h0.95v1.4h-0.95zM1269.2 138.4h0.95v1.4h-0.95zM1270.3 138.4h0.95v1.4h-0.95zM1271.4 138.4h0.95v1.4h-0.95zM1269.2 140.4h0.95v1.4h-0.95zM1270.3 140.4h0.95v1.4h-0.95zM1271.4 140.4h0.95v1.4h-0.95zM1272.5 140.4h0.95v1.4h-0.95zM1264.7 146.4h0.95v1.4h-0.95zM1265.8 146.4h0.95v1.4h-0.95zM1266.9 146.4h0.95v1.4h-0.95zM1268.0 146.4h0.95v1.4h-0.95zM1269.2 146.4h0.95v1.4h-0.95zM1270.3 146.4h0.95v1.4h-0.95zM1271.4 146.4h0.95v1.4h-0.95zM1289.3 162.4h0.95v1.4h-0.95zM1290.4 162.4h0.95v1.4h-0.95zM1291.6 162.4h0.95v1.4h-0.95zM1292.7 162.4h0.95v1.4h-0.95zM1287.1 164.4h0.95v1.4h-0.95zM1288.2 164.4h0.95v1.4h-0.95zM1289.3 164.4h0.95v1.4h-0.95zM1290.4 164.4h0.95v1.4h-0.95zM1273.6 170.4h0.95v1.4h-0.95zM1274.8 170.4h0.95v1.4h-0.95zM1275.9 170.4h0.95v1.4h-0.95zM1277.0 170.4h0.95v1.4h-0.95zM1278.1 184.4h0.95v1.4h-0.95zM1279.2 184.4h0.95v1.4h-0.95zM1280.4 184.4h0.95v1.4h-0.95zM1281.5 184.4h0.95v1.4h-0.95zM1278.1 190.4h0.95v1.4h-0.95zM1279.2 190.4h0.95v1.4h-0.95zM1280.4 190.4h0.95v1.4h-0.95zM1281.5 190.4h0.95v1.4h-0.95zM1278.1 196.4h0.95v1.4h-0.95zM1279.2 196.4h0.95v1.4h-0.95zM1280.4 196.4h0.95v1.4h-0.95zM1281.5 196.4h0.95v1.4h-0.95zM1278.1 202.4h0.95v1.4h-0.95zM1279.2 202.4h0.95v1.4h-0.95zM1280.4 202.4h0.95v1.4h-0.95zM1281.5 202.4h0.95v1.4h-0.95zM1311.7 208.4h0.95v1.4h-0.95zM1312.8 208.4h0.95v1.4h-0.95zM1314.0 208.4h0.95v1.4h-0.95zM1315.1 208.4h0.95v1.4h-0.95zM1278.1 210.4h0.95v1.4h-0.95zM1279.2 210.4h0.95v1.4h-0.95zM1280.4 210.4h0.95v1.4h-0.95zM1281.5 210.4h0.95v1.4h-0.95zM1264.7 220.4h0.95v1.4h-0.95zM1265.8 220.4h0.95v1.4h-0.95zM1266.9 220.4h0.95v1.4h-0.95zM1268.0 220.4h0.95v1.4h-0.95zM1269.2 220.4h0.95v1.4h-0.95zM1270.3 220.4h0.95v1.4h-0.95zM1271.4 220.4h0.95v1.4h-0.95zM1269.2 238.4h0.95v1.4h-0.95zM1270.3 238.4h0.95v1.4h-0.95zM1271.4 238.4h0.95v1.4h-0.95zM1272.5 238.4h0.95v1.4h-0.95zM1264.7 246.4h0.95v1.4h-0.95zM1265.8 246.4h0.95v1.4h-0.95zM1266.9 246.4h0.95v1.4h-0.95zM1268.0 246.4h0.95v1.4h-0.95zM1269.2 246.4h0.95v1.4h-0.95zM1270.3 246.4h0.95v1.4h-0.95zM1271.4 246.4h0.95v1.4h-0.95zM1302.8 248.4h0.95v1.4h-0.95zM1303.9 248.4h0.95v1.4h-0.95zM1305.0 248.4h0.95v1.4h-0.95zM1306.1 248.4h0.95v1.4h-0.95zM1264.7 254.4h0.95v1.4h-0.95zM1265.8 254.4h0.95v1.4h-0.95zM1266.9 254.4h0.95v1.4h-0.95zM1268.0 254.4h0.95v1.4h-0.95zM1269.2 254.4h0.95v1.4h-0.95zM1270.3 254.4h0.95v1.4h-0.95zM1271.4 254.4h0.95v1.4h-0.95zM1290.4 256.4h0.95v1.4h-0.95zM1291.6 256.4h0.95v1.4h-0.95zM1292.7 256.4h0.95v1.4h-0.95zM1293.8 256.4h0.95v1.4h-0.95zM1288.2 258.4h0.95v1.4h-0.95zM1289.3 258.4h0.95v1.4h-0.95zM1290.4 258.4h0.95v1.4h-0.95zM1291.6 258.4h0.95v1.4h-0.95zM1307.2 262.4h0.95v1.4h-0.95zM1308.4 262.4h0.95v1.4h-0.95zM1309.5 262.4h0.95v1.4h-0.95zM1310.6 262.4h0.95v1.4h-0.95zM1307.2 266.4h0.95v1.4h-0.95zM1308.4 266.4h0.95v1.4h-0.95zM1309.5 266.4h0.95v1.4h-0.95zM1310.6 266.4h0.95v1.4h-0.95zM1269.2 270.4h0.95v1.4h-0.95zM1270.3 270.4h0.95v1.4h-0.95zM1271.4 270.4h0.95v1.4h-0.95zM1272.5 270.4h0.95v1.4h-0.95zM1264.7 276.4h0.95v1.4h-0.95zM1265.8 276.4h0.95v1.4h-0.95zM1266.9 276.4h0.95v1.4h-0.95zM1268.0 276.4h0.95v1.4h-0.95zM1269.2 276.4h0.95v1.4h-0.95zM1270.3 276.4h0.95v1.4h-0.95zM1271.4 276.4h0.95v1.4h-0.95zM1288.2 278.4h0.95v1.4h-0.95zM1289.3 278.4h0.95v1.4h-0.95zM1290.4 278.4h0.95v1.4h-0.95zM1291.6 278.4h0.95v1.4h-0.95zM1286.0 280.4h0.95v1.4h-0.95zM1287.1 280.4h0.95v1.4h-0.95zM1288.2 280.4h0.95v1.4h-0.95zM1289.3 280.4h0.95v1.4h-0.95zM1307.2 284.4h0.95v1.4h-0.95zM1308.4 284.4h0.95v1.4h-0.95zM1309.5 284.4h0.95v1.4h-0.95zM1310.6 284.4h0.95v1.4h-0.95zM1307.2 288.4h0.95v1.4h-0.95zM1308.4 288.4h0.95v1.4h-0.95zM1309.5 288.4h0.95v1.4h-0.95zM1310.6 288.4h0.95v1.4h-0.95zM1269.2 296.4h0.95v1.4h-0.95zM1270.3 296.4h0.95v1.4h-0.95zM1271.4 296.4h0.95v1.4h-0.95zM1272.5 296.4h0.95v1.4h-0.95zM1264.7 302.4h0.95v1.4h-0.95zM1265.8 302.4h0.95v1.4h-0.95zM1266.9 302.4h0.95v1.4h-0.95zM1268.0 302.4h0.95v1.4h-0.95zM1269.2 302.4h0.95v1.4h-0.95zM1270.3 302.4h0.95v1.4h-0.95zM1271.4 302.4h0.95v1.4h-0.95zM1316.2 304.4h0.95v1.4h-0.95zM1317.3 304.4h0.95v1.4h-0.95zM1318.4 304.4h0.95v1.4h-0.95zM1319.6 304.4h0.95v1.4h-0.95zM1307.2 306.4h0.95v1.4h-0.95zM1308.4 306.4h0.95v1.4h-0.95zM1309.5 306.4h0.95v1.4h-0.95zM1310.6 306.4h0.95v1.4h-0.95zM1273.6 312.4h0.95v1.4h-0.95zM1274.8 312.4h0.95v1.4h-0.95zM1275.9 312.4h0.95v1.4h-0.95zM1277.0 312.4h0.95v1.4h-0.95zM1264.7 320.4h0.95v1.4h-0.95zM1265.8 320.4h0.95v1.4h-0.95zM1266.9 320.4h0.95v1.4h-0.95zM1268.0 320.4h0.95v1.4h-0.95zM1269.2 320.4h0.95v1.4h-0.95zM1270.3 320.4h0.95v1.4h-0.95zM1271.4 320.4h0.95v1.4h-0.95zM1308.4 322.4h0.95v1.4h-0.95zM1309.5 322.4h0.95v1.4h-0.95zM1310.6 322.4h0.95v1.4h-0.95zM1311.7 322.4h0.95v1.4h-0.95z"/><path fill="#9cdcfe" d="M1268.0 104.4h0.95v1.4h-0.95zM1269.2 104.4h0.95v1.4h-0.95zM1270.3 104.4h0.95v1.4h-0.95zM1271.4 104.4h0.95v1.4h-0.95zM1273.6 104.4h0.95v1.4h-0.95zM1274.8 104.4h0.95v1.4h-0.95zM1275.9 104.4h0.95v1.4h-0.95zM1277.0 104.4h0.95v1.4h-0.95zM1268.0 108.4h0.95v1.4h-0.95zM1269.2 108.4h0.95v1.4h-0.95zM1270.3 108.4h0.95v1.4h-0.95zM1271.4 108.4h0.95v1.4h-0.95zM1272.5 108.4h0.95v1.4h-0.95zM1274.8 108.4h0.95v1.4h-0.95zM1275.9 108.4h0.95v1.4h-0.95zM1277.0 108.4h0.95v1.4h-0.95zM1278.1 108.4h0.95v1.4h-0.95zM1279.2 108.4h0.95v1.4h-0.95zM1284.8 122.4h0.95v1.4h-0.95zM1286.0 122.4h0.95v1.4h-0.95zM1287.1 122.4h0.95v1.4h-0.95zM1288.2 122.4h0.95v1.4h-0.95zM1289.3 122.4h0.95v1.4h-0.95zM1290.4 122.4h0.95v1.4h-0.95zM1291.6 122.4h0.95v1.4h-0.95zM1292.7 122.4h0.95v1.4h-0.95zM1293.8 122.4h0.95v1.4h-0.95zM1294.9 122.4h0.95v1.4h-0.95zM1296.0 122.4h0.95v1.4h-0.95zM1297.2 122.4h0.95v1.4h-0.95zM1298.3 122.4h0.95v1.4h-0.95zM1299.4 122.4h0.95v1.4h-0.95zM1301.6 128.4h0.95v1.4h-0.95zM1302.8 128.4h0.95v1.4h-0.95zM1303.9 128.4h0.95v1.4h-0.95zM1305.0 128.4h0.95v1.4h-0.95zM1283.7 130.4h0.95v1.4h-0.95zM1284.8 130.4h0.95v1.4h-0.95zM1269.2 132.4h0.95v1.4h-0.95zM1270.3 132.4h0.95v1.4h-0.95zM1277.0 148.4h0.95v1.4h-0.95zM1278.1 148.4h0.95v1.4h-0.95zM1279.2 148.4h0.95v1.4h-0.95zM1269.2 150.4h0.95v1.4h-0.95zM1270.3 150.4h0.95v1.4h-0.95zM1271.4 150.4h0.95v1.4h-0.95zM1269.2 152.4h0.95v1.4h-0.95zM1270.3 152.4h0.95v1.4h-0.95zM1271.4 152.4h0.95v1.4h-0.95zM1269.2 154.4h0.95v1.4h-0.95zM1270.3 154.4h0.95v1.4h-0.95zM1271.4 154.4h0.95v1.4h-0.95zM1269.2 156.4h0.95v1.4h-0.95zM1270.3 156.4h0.95v1.4h-0.95zM1271.4 156.4h0.95v1.4h-0.95zM1269.2 158.4h0.95v1.4h-0.95zM1270.3 158.4h0.95v1.4h-0.95zM1271.4 158.4h0.95v1.4h-0.95zM1277.0 162.4h0.95v1.4h-0.95zM1278.1 162.4h0.95v1.4h-0.95zM1279.2 162.4h0.95v1.4h-0.95zM1280.4 162.4h0.95v1.4h-0.95zM1281.5 162.4h0.95v1.4h-0.95zM1282.6 162.4h0.95v1.4h-0.95zM1283.7 162.4h0.95v1.4h-0.95zM1284.8 162.4h0.95v1.4h-0.95zM1307.2 162.4h0.95v1.4h-0.95zM1308.4 162.4h0.95v1.4h-0.95zM1309.5 162.4h0.95v1.4h-0.95zM1273.6 164.4h0.95v1.4h-0.95zM1274.8 164.4h0.95v1.4h-0.95zM1275.9 164.4h0.95v1.4h-0.95zM1277.0 164.4h0.95v1.4h-0.95zM1278.1 164.4h0.95v1.4h-0.95zM1279.2 164.4h0.95v1.4h-0.95zM1280.4 164.4h0.95v1.4h-0.95zM1281.5 164.4h0.95v1.4h-0.95zM1273.6 166.4h0.95v1.4h-0.95zM1274.8 166.4h0.95v1.4h-0.95zM1275.9 166.4h0.95v1.4h-0.95zM1277.0 166.4h0.95v1.4h-0.95zM1278.1 166.4h0.95v1.4h-0.95zM1281.5 168.4h0.95v1.4h-0.95zM1282.6 168.4h0.95v1.4h-0.95zM1283.7 168.4h0.95v1.4h-0.95zM1284.8 168.4h0.95v1.4h-0.95zM1286.0 168.4h0.95v1.4h-0.95zM1287.1 168.4h0.95v1.4h-0.95zM1288.2 168.4h0.95v1.4h-0.95zM1289.3 168.4h0.95v1.4h-0.95zM1273.6 176.4h0.95v1.4h-0.95zM1274.8 176.4h0.95v1.4h-0.95zM1275.9 176.4h0.95v1.4h-0.95zM1277.0 176.4h0.95v1.4h-0.95zM1278.1 176.4h0.95v1.4h-0.95zM1301.6 176.4h0.95v1.4h-0.95zM1302.8 176.4h0.95v1.4h-0.95zM1303.9 176.4h0.95v1.4h-0.95zM1305.0 176.4h0.95v1.4h-0.95zM1306.1 176.4h0.95v1.4h-0.95zM1307.2 176.4h0.95v1.4h-0.95zM1308.4 176.4h0.95v1.4h-0.95zM1309.5 176.4h0.95v1.4h-0.95zM1278.1 180.4h0.95v1.4h-0.95zM1279.2 180.4h0.95v1.4h-0.95zM1280.4 180.4h0.95v1.4h-0.95zM1281.5 180.4h0.95v1.4h-0.95zM1282.6 180.4h0.95v1.4h-0.95zM1277.0 222.4h0.95v1.4h-0.95zM1278.1 222.4h0.95v1.4h-0.95zM1279.2 222.4h0.95v1.4h-0.95zM1269.2 224.4h0.95v1.4h-0.95zM1270.3 224.4h0.95v1.4h-0.95zM1271.4 224.4h0.95v1.4h-0.95zM1279.2 226.4h0.95v1.4h-0.95zM1287.1 226.4h0.95v1.4h-0.95zM1291.6 226.4h0.95v1.4h-0.95zM1292.7 226.4h0.95v1.4h-0.95zM1293.8 226.4h0.95v1.4h-0.95zM1294.9 226.4h0.95v1.4h-0.95zM1296.0 226.4h0.95v1.4h-0.95zM1297.2 226.4h0.95v1.4h-0.95zM1298.3 226.4h0.95v1.4h-0.95zM1299.4 226.4h0.95v1.4h-0.95zM1300.5 226.4h0.95v1.4h-0.95zM1301.6 226.4h0.95v1.4h-0.95zM1302.8 226.4h0.95v1.4h-0.95zM1303.9 226.4h0.95v1.4h-0.95zM1305.0 226.4h0.95v1.4h-0.95zM1306.1 226.4h0.95v1.4h-0.95zM1317.3 226.4h0.95v1.4h-0.95zM1273.6 228.4h0.95v1.4h-0.95zM1274.8 228.4h0.95v1.4h-0.95zM1275.9 228.4h0.95v1.4h-0.95zM1290.4 228.4h0.95v1.4h-0.95zM1303.9 228.4h0.95v1.4h-0.95zM1305.0 228.4h0.95v1.4h-0.95zM1306.1 228.4h0.95v1.4h-0.95zM1307.2 228.4h0.95v1.4h-0.95zM1308.4 228.4h0.95v1.4h-0.95zM1309.5 228.4h0.95v1.4h-0.95zM1310.6 228.4h0.95v1.4h-0.95zM1311.7 228.4h0.95v1.4h-0.95zM1312.8 228.4h0.95v1.4h-0.95zM1314.0 228.4h0.95v1.4h-0.95zM1315.1 228.4h0.95v1.4h-0.95zM1316.2 228.4h0.95v1.4h-0.95zM1317.3 228.4h0.95v1.4h-0.95zM1318.4 228.4h0.95v1.4h-0.95zM1325.2 228.4h0.95v1.4h-0.95zM1273.6 232.4h0.95v1.4h-0.95zM1274.8 232.4h0.95v1.4h-0.95zM1275.9 232.4h0.95v1.4h-0.95zM1273.6 234.4h0.95v1.4h-0.95zM1274.8 234.4h0.95v1.4h-0.95zM1275.9 234.4h0.95v1.4h-0.95zM1294.9 234.4h0.95v1.4h-0.95zM1296.0 234.4h0.95v1.4h-0.95zM1297.2 234.4h0.95v1.4h-0.95zM1298.3 234.4h0.95v1.4h-0.95zM1299.4 234.4h0.95v1.4h-0.95zM1300.5 234.4h0.95v1.4h-0.95zM1301.6 234.4h0.95v1.4h-0.95zM1302.8 234.4h0.95v1.4h-0.95zM1303.9 234.4h0.95v1.4h-0.95zM1305.0 234.4h0.95v1.4h-0.95zM1306.1 234.4h0.95v1.4h-0.95zM1307.2 234.4h0.95v1.4h-0.95zM1308.4 234.4h0.95v1.4h-0.95zM1309.5 234.4h0.95v1.4h-0.95zM1281.5 238.4h0.95v1.4h-0.95zM1282.6 238.4h0.95v1.4h-0.95zM1283.7 238.4h0.95v1.4h-0.95zM1293.8 246.4h0.95v1.4h-0.95zM1294.9 246.4h0.95v1.4h-0.95zM1296.0 246.4h0.95v1.4h-0.95zM1309.5 248.4h0.95v1.4h-0.95zM1310.6 248.4h0.95v1.4h-0.95zM1311.7 248.4h0.95v1.4h-0.95zM1277.0 256.4h0.95v1.4h-0.95zM1278.1 256.4h0.95v1.4h-0.95zM1279.2 256.4h0.95v1.4h-0.95zM1280.4 256.4h0.95v1.4h-0.95zM1281.5 256.4h0.95v1.4h-0.95zM1282.6 256.4h0.95v1.4h-0.95zM1283.7 256.4h0.95v1.4h-0.95zM1284.8 256.4h0.95v1.4h-0.95zM1286.0 256.4h0.95v1.4h-0.95zM1273.6 258.4h0.95v1.4h-0.95zM1274.8 258.4h0.95v1.4h-0.95zM1275.9 258.4h0.95v1.4h-0.95zM1277.0 258.4h0.95v1.4h-0.95zM1278.1 258.4h0.95v1.4h-0.95zM1279.2 258.4h0.95v1.4h-0.95zM1280.4 258.4h0.95v1.4h-0.95zM1281.5 258.4h0.95v1.4h-0.95zM1282.6 258.4h0.95v1.4h-0.95zM1273.6 260.4h0.95v1.4h-0.95zM1274.8 260.4h0.95v1.4h-0.95zM1275.9 260.4h0.95v1.4h-0.95zM1277.0 260.4h0.95v1.4h-0.95zM1278.1 260.4h0.95v1.4h-0.95zM1279.2 260.4h0.95v1.4h-0.95zM1280.4 260.4h0.95v1.4h-0.95zM1281.5 260.4h0.95v1.4h-0.95zM1282.6 260.4h0.95v1.4h-0.95zM1283.7 260.4h0.95v1.4h-0.95zM1284.8 260.4h0.95v1.4h-0.95zM1286.0 260.4h0.95v1.4h-0.95zM1287.1 260.4h0.95v1.4h-0.95zM1288.2 260.4h0.95v1.4h-0.95zM1317.3 260.4h0.95v1.4h-0.95zM1318.4 260.4h0.95v1.4h-0.95zM1319.6 260.4h0.95v1.4h-0.95zM1320.7 260.4h0.95v1.4h-0.95zM1321.8 260.4h0.95v1.4h-0.95zM1322.9 260.4h0.95v1.4h-0.95zM1324.0 260.4h0.95v1.4h-0.95zM1325.2 260.4h0.95v1.4h-0.95zM1326.3 260.4h0.95v1.4h-0.95zM1277.0 278.4h0.95v1.4h-0.95zM1278.1 278.4h0.95v1.4h-0.95zM1279.2 278.4h0.95v1.4h-0.95zM1280.4 278.4h0.95v1.4h-0.95zM1281.5 278.4h0.95v1.4h-0.95zM1282.6 278.4h0.95v1.4h-0.95zM1283.7 278.4h0.95v1.4h-0.95zM1273.6 280.4h0.95v1.4h-0.95zM1274.8 280.4h0.95v1.4h-0.95zM1275.9 280.4h0.95v1.4h-0.95zM1277.0 280.4h0.95v1.4h-0.95zM1278.1 280.4h0.95v1.4h-0.95zM1279.2 280.4h0.95v1.4h-0.95zM1280.4 280.4h0.95v1.4h-0.95zM1273.6 282.4h0.95v1.4h-0.95zM1274.8 282.4h0.95v1.4h-0.95zM1275.9 282.4h0.95v1.4h-0.95zM1277.0 282.4h0.95v1.4h-0.95zM1278.1 282.4h0.95v1.4h-0.95zM1279.2 282.4h0.95v1.4h-0.95zM1280.4 282.4h0.95v1.4h-0.95zM1281.5 282.4h0.95v1.4h-0.95zM1282.6 282.4h0.95v1.4h-0.95zM1283.7 282.4h0.95v1.4h-0.95zM1284.8 282.4h0.95v1.4h-0.95zM1286.0 282.4h0.95v1.4h-0.95zM1287.1 282.4h0.95v1.4h-0.95zM1288.2 282.4h0.95v1.4h-0.95zM1294.9 282.4h0.95v1.4h-0.95zM1296.0 282.4h0.95v1.4h-0.95zM1297.2 282.4h0.95v1.4h-0.95zM1298.3 282.4h0.95v1.4h-0.95zM1299.4 282.4h0.95v1.4h-0.95zM1300.5 282.4h0.95v1.4h-0.95zM1301.6 282.4h0.95v1.4h-0.95zM1273.6 304.4h0.95v1.4h-0.95zM1274.8 304.4h0.95v1.4h-0.95zM1275.9 304.4h0.95v1.4h-0.95zM1277.0 304.4h0.95v1.4h-0.95zM1278.1 304.4h0.95v1.4h-0.95zM1301.6 320.4h0.95v1.4h-0.95zM1302.8 320.4h0.95v1.4h-0.95zM1303.9 320.4h0.95v1.4h-0.95zM1315.1 322.4h0.95v1.4h-0.95zM1316.2 322.4h0.95v1.4h-0.95zM1317.3 322.4h0.95v1.4h-0.95z"/><path fill="#d4d4d4" d="M1272.5 105.0h0.95v0.8h-0.95zM1278.1 105.0h0.95v0.8h-0.95zM1289.3 105.0h0.95v0.8h-0.95zM1273.6 109.0h0.95v0.8h-0.95zM1280.4 109.0h0.95v0.8h-0.95zM1293.8 109.0h0.95v0.8h-0.95zM1289.3 118.4h0.95v1.4h-0.95zM1274.8 122.4h0.95v1.4h-0.95zM1282.6 122.4h0.95v1.4h-0.95zM1301.6 122.4h0.95v1.4h-0.95zM1318.4 122.4h0.95v1.4h-0.95zM1319.6 122.4h0.95v1.4h-0.95zM1320.7 122.4h0.95v1.4h-0.95zM1321.8 122.4h0.95v1.4h-0.95zM1322.9 123.0h0.95v0.8h-0.95zM1290.4 128.4h0.95v1.4h-0.95zM1298.3 128.4h0.95v1.4h-0.95zM1299.4 128.4h0.95v1.4h-0.95zM1306.1 128.4h0.95v1.4h-0.95zM1308.4 128.4h0.95v1.4h-0.95zM1287.1 130.4h0.95v1.4h-0.95zM1307.2 130.4h0.95v1.4h-0.95zM1308.4 130.4h0.95v1.4h-0.95zM1309.5 131.0h0.95v0.8h-0.95zM1271.4 133.0h0.95v0.8h-0.95zM1280.4 132.4h0.95v1.4h-0.95zM1281.5 132.4h0.95v1.4h-0.95zM1282.6 133.0h0.95v0.8h-0.95zM1264.7 134.4h0.95v1.4h-0.95zM1291.6 138.4h0.95v1.4h-0.95zM1292.7 138.4h0.95v1.4h-0.95zM1294.9 138.4h0.95v1.4h-0.95zM1273.6 141.0h0.95v0.8h-0.95zM1282.6 140.4h0.95v1.4h-0.95zM1283.7 140.4h0.95v1.4h-0.95zM1284.8 141.0h0.95v0.8h-0.95zM1264.7 142.4h0.95v1.4h-0.95zM1287.1 146.4h0.95v1.4h-0.95zM1288.2 146.4h0.95v1.4h-0.95zM1290.4 146.4h0.95v1.4h-0.95zM1281.5 148.4h0.95v1.4h-0.95zM1293.8 149.0h0.95v0.8h-0.95zM1273.6 150.4h0.95v1.4h-0.95zM1274.8 150.4h0.95v1.4h-0.95zM1307.2 151.0h0.95v0.8h-0.95zM1273.6 152.4h0.95v1.4h-0.95zM1274.8 152.4h0.95v1.4h-0.95zM1296.0 153.0h0.95v0.8h-0.95zM1273.6 154.4h0.95v1.4h-0.95zM1274.8 154.4h0.95v1.4h-0.95zM1294.9 155.0h0.95v0.8h-0.95zM1273.6 156.4h0.95v1.4h-0.95zM1274.8 156.4h0.95v1.4h-0.95zM1292.7 157.0h0.95v0.8h-0.95zM1273.6 158.4h0.95v1.4h-0.95zM1274.8 158.4h0.95v1.4h-0.95zM1290.4 159.0h0.95v0.8h-0.95zM1287.1 162.4h0.95v1.4h-0.95zM1293.8 163.0h0.95v0.8h-0.95zM1306.1 162.4h0.95v1.4h-0.95zM1310.6 162.4h0.95v1.4h-0.95zM1311.7 163.0h0.95v0.8h-0.95zM1272.5 164.4h0.95v1.4h-0.95zM1283.7 164.4h0.95v1.4h-0.95zM1284.8 164.4h0.95v1.4h-0.95zM1291.6 164.4h0.95v1.4h-0.95zM1293.8 164.4h0.95v1.4h-0.95zM1280.4 166.4h0.95v1.4h-0.95zM1286.0 167.0h0.95v0.8h-0.95zM1269.2 168.4h0.95v1.4h-0.95zM1280.4 168.4h0.95v1.4h-0.95zM1290.4 169.0h0.95v0.8h-0.95zM1298.3 168.4h0.95v1.4h-0.95zM1301.6 168.4h0.95v1.4h-0.95zM1302.8 168.4h0.95v1.4h-0.95zM1305.0 168.4h0.95v1.4h-0.95zM1278.1 171.0h0.95v0.8h-0.95zM1287.1 170.4h0.95v1.4h-0.95zM1288.2 170.4h0.95v1.4h-0.95zM1289.3 171.0h0.95v0.8h-0.95zM1269.2 172.4h0.95v1.4h-0.95zM1280.4 176.4h0.95v1.4h-0.95zM1290.4 177.0h0.95v0.8h-0.95zM1300.5 176.4h0.95v1.4h-0.95zM1310.6 176.4h0.95v1.4h-0.95zM1311.7 177.0h0.95v0.8h-0.95zM1277.0 180.4h0.95v1.4h-0.95zM1283.7 180.4h0.95v1.4h-0.95zM1286.0 180.4h0.95v1.4h-0.95zM1279.2 182.4h0.95v1.4h-0.95zM1280.4 183.0h0.95v0.8h-0.95zM1282.6 185.0h0.95v0.8h-0.95zM1293.8 184.4h0.95v1.4h-0.95zM1294.9 184.4h0.95v1.4h-0.95zM1296.0 185.0h0.95v0.8h-0.95zM1283.7 187.0h0.95v0.8h-0.95zM1279.2 188.4h0.95v1.4h-0.95zM1280.4 189.0h0.95v0.8h-0.95zM1282.6 191.0h0.95v0.8h-0.95zM1292.7 190.4h0.95v1.4h-0.95zM1293.8 190.4h0.95v1.4h-0.95zM1294.9 191.0h0.95v0.8h-0.95zM1283.7 193.0h0.95v0.8h-0.95zM1279.2 194.4h0.95v1.4h-0.95zM1280.4 195.0h0.95v0.8h-0.95zM1282.6 197.0h0.95v0.8h-0.95zM1297.2 196.4h0.95v1.4h-0.95zM1298.3 196.4h0.95v1.4h-0.95zM1299.4 197.0h0.95v0.8h-0.95zM1283.7 199.0h0.95v0.8h-0.95zM1279.2 200.4h0.95v1.4h-0.95zM1280.4 201.0h0.95v0.8h-0.95zM1282.6 203.0h0.95v0.8h-0.95zM1289.3 202.4h0.95v1.4h-0.95zM1290.4 202.4h0.95v1.4h-0.95zM1291.6 203.0h0.95v0.8h-0.95zM1283.7 205.0h0.95v0.8h-0.95zM1281.5 207.0h0.95v0.8h-0.95zM1290.4 209.0h0.95v0.8h-0.95zM1310.6 208.4h0.95v1.4h-0.95zM1316.2 209.0h0.95v0.8h-0.95zM1344.2 208.4h0.95v1.4h-0.95zM1345.3 209.0h0.95v0.8h-0.95zM1282.6 211.0h0.95v0.8h-0.95zM1291.6 210.4h0.95v1.4h-0.95zM1292.7 210.4h0.95v1.4h-0.95zM1293.8 211.0h0.95v0.8h-0.95zM1283.7 213.0h0.95v0.8h-0.95zM1269.2 214.4h0.95v1.4h-0.95zM1264.7 216.4h0.95v1.4h-0.95zM1292.7 220.4h0.95v1.4h-0.95zM1293.8 220.4h0.95v1.4h-0.95zM1296.0 220.4h0.95v1.4h-0.95zM1281.5 222.4h0.95v1.4h-0.95zM1303.9 223.0h0.95v0.8h-0.95zM1273.6 224.4h0.95v1.4h-0.95zM1274.8 224.4h0.95v1.4h-0.95zM1309.5 225.0h0.95v0.8h-0.95zM1273.6 226.4h0.95v1.4h-0.95zM1281.5 226.4h0.95v1.4h-0.95zM1283.7 226.4h0.95v1.4h-0.95zM1284.8 227.0h0.95v0.8h-0.95zM1289.3 226.4h0.95v1.4h-0.95zM1307.2 227.0h0.95v0.8h-0.95zM1312.8 226.4h0.95v1.4h-0.95zM1314.0 226.4h0.95v1.4h-0.95zM1315.1 227.0h0.95v0.8h-0.95zM1318.4 226.4h0.95v1.4h-0.95zM1319.6 226.4h0.95v1.4h-0.95zM1320.7 226.4h0.95v1.4h-0.95zM1322.9 226.4h0.95v1.4h-0.95zM1278.1 228.4h0.95v1.4h-0.95zM1279.2 228.4h0.95v1.4h-0.95zM1288.2 228.4h0.95v1.4h-0.95zM1292.7 228.4h0.95v1.4h-0.95zM1301.6 228.4h0.95v1.4h-0.95zM1319.6 229.0h0.95v0.8h-0.95zM1324.0 228.4h0.95v1.4h-0.95zM1326.3 228.4h0.95v1.4h-0.95zM1328.5 228.4h0.95v1.4h-0.95zM1335.2 229.0h0.95v0.8h-0.95zM1269.2 230.4h0.95v1.4h-0.95zM1278.1 232.4h0.95v1.4h-0.95zM1279.2 232.4h0.95v1.4h-0.95zM1314.0 233.0h0.95v0.8h-0.95zM1278.1 234.4h0.95v1.4h-0.95zM1279.2 234.4h0.95v1.4h-0.95zM1292.7 234.4h0.95v1.4h-0.95zM1310.6 235.0h0.95v0.8h-0.95zM1316.2 234.4h0.95v1.4h-0.95zM1317.3 234.4h0.95v1.4h-0.95zM1319.6 234.4h0.95v1.4h-0.95zM1329.6 235.0h0.95v0.8h-0.95zM1273.6 239.0h0.95v0.8h-0.95zM1280.4 238.4h0.95v1.4h-0.95zM1284.8 238.4h0.95v1.4h-0.95zM1286.0 239.0h0.95v0.8h-0.95zM1264.7 242.4h0.95v1.4h-0.95zM1284.8 246.4h0.95v1.4h-0.95zM1297.2 246.4h0.95v1.4h-0.95zM1299.4 246.4h0.95v1.4h-0.95zM1281.5 249.0h0.95v0.8h-0.95zM1301.6 248.4h0.95v1.4h-0.95zM1307.2 249.0h0.95v0.8h-0.95zM1312.8 248.4h0.95v1.4h-0.95zM1314.0 249.0h0.95v0.8h-0.95zM1264.7 250.4h0.95v1.4h-0.95zM1288.2 254.4h0.95v1.4h-0.95zM1289.3 254.4h0.95v1.4h-0.95zM1291.6 254.4h0.95v1.4h-0.95zM1288.2 256.4h0.95v1.4h-0.95zM1294.9 257.0h0.95v0.8h-0.95zM1307.2 256.4h0.95v1.4h-0.95zM1334.1 256.4h0.95v1.4h-0.95zM1335.2 257.0h0.95v0.8h-0.95zM1272.5 258.4h0.95v1.4h-0.95zM1284.8 258.4h0.95v1.4h-0.95zM1286.0 258.4h0.95v1.4h-0.95zM1292.7 258.4h0.95v1.4h-0.95zM1294.9 258.4h0.95v1.4h-0.95zM1289.3 261.0h0.95v0.8h-0.95zM1297.2 260.4h0.95v1.4h-0.95zM1306.1 261.0h0.95v0.8h-0.95zM1316.2 260.4h0.95v1.4h-0.95zM1327.4 260.4h0.95v1.4h-0.95zM1328.5 260.4h0.95v1.4h-0.95zM1329.6 261.0h0.95v0.8h-0.95zM1286.0 263.0h0.95v0.8h-0.95zM1306.1 262.4h0.95v1.4h-0.95zM1311.7 263.0h0.95v0.8h-0.95zM1330.8 262.4h0.95v1.4h-0.95zM1331.9 263.0h0.95v0.8h-0.95zM1269.2 264.4h0.95v1.4h-0.95zM1277.0 264.4h0.95v1.4h-0.95zM1286.0 267.0h0.95v0.8h-0.95zM1306.1 266.4h0.95v1.4h-0.95zM1311.7 267.0h0.95v0.8h-0.95zM1345.3 266.4h0.95v1.4h-0.95zM1346.4 267.0h0.95v0.8h-0.95zM1269.2 268.4h0.95v1.4h-0.95zM1273.6 271.0h0.95v0.8h-0.95zM1282.6 270.4h0.95v1.4h-0.95zM1283.7 270.4h0.95v1.4h-0.95zM1284.8 271.0h0.95v0.8h-0.95zM1264.7 272.4h0.95v1.4h-0.95zM1289.3 276.4h0.95v1.4h-0.95zM1290.4 276.4h0.95v1.4h-0.95zM1292.7 276.4h0.95v1.4h-0.95zM1286.0 278.4h0.95v1.4h-0.95zM1292.7 279.0h0.95v0.8h-0.95zM1305.0 278.4h0.95v1.4h-0.95zM1329.6 278.4h0.95v1.4h-0.95zM1330.8 279.0h0.95v0.8h-0.95zM1272.5 280.4h0.95v1.4h-0.95zM1282.6 280.4h0.95v1.4h-0.95zM1283.7 280.4h0.95v1.4h-0.95zM1290.4 280.4h0.95v1.4h-0.95zM1292.7 280.4h0.95v1.4h-0.95zM1289.3 283.0h0.95v0.8h-0.95zM1293.8 282.4h0.95v1.4h-0.95zM1302.8 282.4h0.95v1.4h-0.95zM1303.9 283.0h0.95v0.8h-0.95zM1286.0 285.0h0.95v0.8h-0.95zM1306.1 284.4h0.95v1.4h-0.95zM1311.7 285.0h0.95v0.8h-0.95zM1330.8 284.4h0.95v1.4h-0.95zM1331.9 285.0h0.95v0.8h-0.95zM1269.2 286.4h0.95v1.4h-0.95zM1277.0 286.4h0.95v1.4h-0.95zM1286.0 289.0h0.95v0.8h-0.95zM1306.1 288.4h0.95v1.4h-0.95zM1311.7 289.0h0.95v0.8h-0.95zM1334.1 288.4h0.95v1.4h-0.95zM1335.2 289.0h0.95v0.8h-0.95zM1269.2 290.4h0.95v1.4h-0.95zM1269.2 292.4h0.95v1.4h-0.95zM1264.7 294.4h0.95v1.4h-0.95zM1273.6 297.0h0.95v0.8h-0.95zM1282.6 296.4h0.95v1.4h-0.95zM1283.7 296.4h0.95v1.4h-0.95zM1284.8 297.0h0.95v0.8h-0.95zM1264.7 298.4h0.95v1.4h-0.95zM1284.8 302.4h0.95v1.4h-0.95zM1286.0 302.4h0.95v1.4h-0.95zM1288.2 302.4h0.95v1.4h-0.95zM1280.4 304.4h0.95v1.4h-0.95zM1294.9 305.0h0.95v0.8h-0.95zM1315.1 304.4h0.95v1.4h-0.95zM1320.7 305.0h0.95v0.8h-0.95zM1330.8 304.4h0.95v1.4h-0.95zM1331.9 305.0h0.95v0.8h-0.95zM1272.5 306.4h0.95v1.4h-0.95zM1286.0 307.0h0.95v0.8h-0.95zM1306.1 306.4h0.95v1.4h-0.95zM1311.7 307.0h0.95v0.8h-0.95zM1340.8 306.4h0.95v1.4h-0.95zM1343.1 306.4h0.95v1.4h-0.95zM1344.2 306.4h0.95v1.4h-0.95zM1346.4 306.4h0.95v1.4h-0.95zM1347.6 306.4h0.95v1.4h-0.95zM1280.4 309.0h0.95v0.8h-0.95zM1286.0 308.4h0.95v1.4h-0.95zM1287.1 308.4h0.95v1.4h-0.95zM1288.2 308.4h0.95v1.4h-0.95zM1289.3 309.0h0.95v0.8h-0.95zM1269.2 310.4h0.95v1.4h-0.95zM1277.0 310.4h0.95v1.4h-0.95zM1278.1 313.0h0.95v0.8h-0.95zM1287.1 312.4h0.95v1.4h-0.95zM1288.2 312.4h0.95v1.4h-0.95zM1289.3 313.0h0.95v0.8h-0.95zM1269.2 314.4h0.95v1.4h-0.95zM1264.7 316.4h0.95v1.4h-0.95zM1292.7 320.4h0.95v1.4h-0.95zM1305.0 320.4h0.95v1.4h-0.95zM1307.2 320.4h0.95v1.4h-0.95zM1289.3 323.0h0.95v0.8h-0.95zM1307.2 322.4h0.95v1.4h-0.95zM1312.8 323.0h0.95v0.8h-0.95zM1318.4 322.4h0.95v1.4h-0.95zM1319.6 323.0h0.95v0.8h-0.95zM1264.7 324.4h0.95v1.4h-0.95zM1260.2 328.4h0.95v1.4h-0.95z"/><path fill="#4ec9b0" d="M1279.2 104.4h0.95v1.4h-0.95zM1280.4 104.4h0.95v1.4h-0.95zM1281.5 104.4h0.95v1.4h-0.95zM1282.6 104.4h0.95v1.4h-0.95zM1283.7 104.4h0.95v1.4h-0.95zM1284.8 104.4h0.95v1.4h-0.95zM1286.0 104.4h0.95v1.4h-0.95zM1287.1 104.4h0.95v1.4h-0.95zM1288.2 104.4h0.95v1.4h-0.95zM1281.5 108.4h0.95v1.4h-0.95zM1282.6 108.4h0.95v1.4h-0.95zM1283.7 108.4h0.95v1.4h-0.95zM1284.8 108.4h0.95v1.4h-0.95zM1286.0 108.4h0.95v1.4h-0.95zM1287.1 108.4h0.95v1.4h-0.95zM1288.2 108.4h0.95v1.4h-0.95zM1289.3 108.4h0.95v1.4h-0.95zM1290.4 108.4h0.95v1.4h-0.95zM1291.6 108.4h0.95v1.4h-0.95zM1292.7 108.4h0.95v1.4h-0.95zM1274.8 118.4h0.95v1.4h-0.95zM1275.9 118.4h0.95v1.4h-0.95zM1277.0 118.4h0.95v1.4h-0.95zM1278.1 118.4h0.95v1.4h-0.95zM1279.2 118.4h0.95v1.4h-0.95zM1280.4 118.4h0.95v1.4h-0.95zM1281.5 118.4h0.95v1.4h-0.95zM1282.6 118.4h0.95v1.4h-0.95zM1283.7 118.4h0.95v1.4h-0.95zM1284.8 118.4h0.95v1.4h-0.95zM1286.0 118.4h0.95v1.4h-0.95zM1287.1 118.4h0.95v1.4h-0.95zM1264.7 122.4h0.95v1.4h-0.95zM1265.8 122.4h0.95v1.4h-0.95zM1266.9 122.4h0.95v1.4h-0.95zM1268.0 122.4h0.95v1.4h-0.95zM1269.2 122.4h0.95v1.4h-0.95zM1270.3 122.4h0.95v1.4h-0.95zM1271.4 122.4h0.95v1.4h-0.95zM1272.5 122.4h0.95v1.4h-0.95zM1273.6 122.4h0.95v1.4h-0.95zM1275.9 122.4h0.95v1.4h-0.95zM1277.0 122.4h0.95v1.4h-0.95zM1278.1 122.4h0.95v1.4h-0.95zM1279.2 122.4h0.95v1.4h-0.95zM1280.4 122.4h0.95v1.4h-0.95zM1281.5 122.4h0.95v1.4h-0.95zM1308.4 122.4h0.95v1.4h-0.95zM1309.5 122.4h0.95v1.4h-0.95zM1310.6 122.4h0.95v1.4h-0.95zM1311.7 122.4h0.95v1.4h-0.95zM1312.8 122.4h0.95v1.4h-0.95zM1314.0 122.4h0.95v1.4h-0.95zM1315.1 122.4h0.95v1.4h-0.95zM1316.2 122.4h0.95v1.4h-0.95zM1317.3 122.4h0.95v1.4h-0.95zM1280.4 128.4h0.95v1.4h-0.95zM1281.5 128.4h0.95v1.4h-0.95zM1282.6 128.4h0.95v1.4h-0.95zM1283.7 128.4h0.95v1.4h-0.95zM1291.6 128.4h0.95v1.4h-0.95zM1292.7 128.4h0.95v1.4h-0.95zM1293.8 128.4h0.95v1.4h-0.95zM1294.9 128.4h0.95v1.4h-0.95zM1296.0 128.4h0.95v1.4h-0.95zM1297.2 128.4h0.95v1.4h-0.95zM1269.2 130.4h0.95v1.4h-0.95zM1270.3 130.4h0.95v1.4h-0.95zM1271.4 130.4h0.95v1.4h-0.95zM1272.5 130.4h0.95v1.4h-0.95zM1273.6 130.4h0.95v1.4h-0.95zM1274.8 130.4h0.95v1.4h-0.95zM1275.9 130.4h0.95v1.4h-0.95zM1277.0 130.4h0.95v1.4h-0.95zM1278.1 130.4h0.95v1.4h-0.95zM1279.2 130.4h0.95v1.4h-0.95zM1280.4 130.4h0.95v1.4h-0.95zM1281.5 130.4h0.95v1.4h-0.95zM1293.8 130.4h0.95v1.4h-0.95zM1294.9 130.4h0.95v1.4h-0.95zM1296.0 130.4h0.95v1.4h-0.95zM1297.2 130.4h0.95v1.4h-0.95zM1298.3 130.4h0.95v1.4h-0.95zM1299.4 130.4h0.95v1.4h-0.95zM1300.5 130.4h0.95v1.4h-0.95zM1301.6 130.4h0.95v1.4h-0.95zM1302.8 130.4h0.95v1.4h-0.95zM1303.9 130.4h0.95v1.4h-0.95zM1305.0 130.4h0.95v1.4h-0.95zM1306.1 130.4h0.95v1.4h-0.95zM1273.6 138.4h0.95v1.4h-0.95zM1274.8 138.4h0.95v1.4h-0.95zM1275.9 138.4h0.95v1.4h-0.95zM1277.0 138.4h0.95v1.4h-0.95zM1273.6 146.4h0.95v1.4h-0.95zM1274.8 146.4h0.95v1.4h-0.95zM1275.9 146.4h0.95v1.4h-0.95zM1277.0 146.4h0.95v1.4h-0.95zM1269.2 148.4h0.95v1.4h-0.95zM1270.3 148.4h0.95v1.4h-0.95zM1271.4 148.4h0.95v1.4h-0.95zM1272.5 148.4h0.95v1.4h-0.95zM1273.6 148.4h0.95v1.4h-0.95zM1274.8 148.4h0.95v1.4h-0.95zM1269.2 162.4h0.95v1.4h-0.95zM1270.3 162.4h0.95v1.4h-0.95zM1271.4 162.4h0.95v1.4h-0.95zM1272.5 162.4h0.95v1.4h-0.95zM1273.6 162.4h0.95v1.4h-0.95zM1274.8 162.4h0.95v1.4h-0.95zM1269.2 176.4h0.95v1.4h-0.95zM1270.3 176.4h0.95v1.4h-0.95zM1271.4 176.4h0.95v1.4h-0.95zM1282.6 176.4h0.95v1.4h-0.95zM1283.7 176.4h0.95v1.4h-0.95zM1284.8 176.4h0.95v1.4h-0.95zM1286.0 176.4h0.95v1.4h-0.95zM1287.1 176.4h0.95v1.4h-0.95zM1288.2 176.4h0.95v1.4h-0.95zM1289.3 176.4h0.95v1.4h-0.95zM1278.1 208.4h0.95v1.4h-0.95zM1279.2 208.4h0.95v1.4h-0.95zM1280.4 208.4h0.95v1.4h-0.95zM1281.5 208.4h0.95v1.4h-0.95zM1282.6 208.4h0.95v1.4h-0.95zM1283.7 208.4h0.95v1.4h-0.95zM1284.8 208.4h0.95v1.4h-0.95zM1286.0 208.4h0.95v1.4h-0.95zM1287.1 208.4h0.95v1.4h-0.95zM1288.2 208.4h0.95v1.4h-0.95zM1289.3 208.4h0.95v1.4h-0.95zM1273.6 220.4h0.95v1.4h-0.95zM1274.8 220.4h0.95v1.4h-0.95zM1275.9 220.4h0.95v1.4h-0.95zM1277.0 220.4h0.95v1.4h-0.95zM1269.2 222.4h0.95v1.4h-0.95zM1270.3 222.4h0.95v1.4h-0.95zM1271.4 222.4h0.95v1.4h-0.95zM1272.5 222.4h0.95v1.4h-0.95zM1273.6 222.4h0.95v1.4h-0.95zM1274.8 222.4h0.95v1.4h-0.95zM1274.8 226.4h0.95v1.4h-0.95zM1275.9 226.4h0.95v1.4h-0.95zM1277.0 226.4h0.95v1.4h-0.95zM1273.6 246.4h0.95v1.4h-0.95zM1274.8 246.4h0.95v1.4h-0.95zM1275.9 246.4h0.95v1.4h-0.95zM1277.0 246.4h0.95v1.4h-0.95zM1286.0 246.4h0.95v1.4h-0.95zM1287.1 246.4h0.95v1.4h-0.95zM1288.2 246.4h0.95v1.4h-0.95zM1289.3 246.4h0.95v1.4h-0.95zM1290.4 246.4h0.95v1.4h-0.95zM1291.6 246.4h0.95v1.4h-0.95zM1269.2 248.4h0.95v1.4h-0.95zM1270.3 248.4h0.95v1.4h-0.95zM1271.4 248.4h0.95v1.4h-0.95zM1272.5 248.4h0.95v1.4h-0.95zM1273.6 248.4h0.95v1.4h-0.95zM1274.8 248.4h0.95v1.4h-0.95zM1275.9 248.4h0.95v1.4h-0.95zM1277.0 248.4h0.95v1.4h-0.95zM1278.1 248.4h0.95v1.4h-0.95zM1279.2 248.4h0.95v1.4h-0.95zM1280.4 248.4h0.95v1.4h-0.95zM1273.6 254.4h0.95v1.4h-0.95zM1274.8 254.4h0.95v1.4h-0.95zM1275.9 254.4h0.95v1.4h-0.95zM1277.0 254.4h0.95v1.4h-0.95zM1269.2 256.4h0.95v1.4h-0.95zM1270.3 256.4h0.95v1.4h-0.95zM1271.4 256.4h0.95v1.4h-0.95zM1272.5 256.4h0.95v1.4h-0.95zM1273.6 256.4h0.95v1.4h-0.95zM1274.8 256.4h0.95v1.4h-0.95zM1298.3 260.4h0.95v1.4h-0.95zM1299.4 260.4h0.95v1.4h-0.95zM1300.5 260.4h0.95v1.4h-0.95zM1301.6 260.4h0.95v1.4h-0.95zM1302.8 260.4h0.95v1.4h-0.95zM1303.9 260.4h0.95v1.4h-0.95zM1305.0 260.4h0.95v1.4h-0.95zM1273.6 262.4h0.95v1.4h-0.95zM1274.8 262.4h0.95v1.4h-0.95zM1275.9 262.4h0.95v1.4h-0.95zM1277.0 262.4h0.95v1.4h-0.95zM1278.1 262.4h0.95v1.4h-0.95zM1279.2 262.4h0.95v1.4h-0.95zM1280.4 262.4h0.95v1.4h-0.95zM1281.5 262.4h0.95v1.4h-0.95zM1282.6 262.4h0.95v1.4h-0.95zM1283.7 262.4h0.95v1.4h-0.95zM1284.8 262.4h0.95v1.4h-0.95zM1273.6 266.4h0.95v1.4h-0.95zM1274.8 266.4h0.95v1.4h-0.95zM1275.9 266.4h0.95v1.4h-0.95zM1277.0 266.4h0.95v1.4h-0.95zM1278.1 266.4h0.95v1.4h-0.95zM1279.2 266.4h0.95v1.4h-0.95zM1280.4 266.4h0.95v1.4h-0.95zM1281.5 266.4h0.95v1.4h-0.95zM1282.6 266.4h0.95v1.4h-0.95zM1283.7 266.4h0.95v1.4h-0.95zM1284.8 266.4h0.95v1.4h-0.95zM1273.6 276.4h0.95v1.4h-0.95zM1274.8 276.4h0.95v1.4h-0.95zM1275.9 276.4h0.95v1.4h-0.95zM1277.0 276.4h0.95v1.4h-0.95zM1269.2 278.4h0.95v1.4h-0.95zM1270.3 278.4h0.95v1.4h-0.95zM1271.4 278.4h0.95v1.4h-0.95zM1272.5 278.4h0.95v1.4h-0.95zM1273.6 278.4h0.95v1.4h-0.95zM1274.8 278.4h0.95v1.4h-0.95zM1273.6 284.4h0.95v1.4h-0.95zM1274.8 284.4h0.95v1.4h-0.95zM1275.9 284.4h0.95v1.4h-0.95zM1277.0 284.4h0.95v1.4h-0.95zM1278.1 284.4h0.95v1.4h-0.95zM1279.2 284.4h0.95v1.4h-0.95zM1280.4 284.4h0.95v1.4h-0.95zM1281.5 284.4h0.95v1.4h-0.95zM1282.6 284.4h0.95v1.4h-0.95zM1283.7 284.4h0.95v1.4h-0.95zM1284.8 284.4h0.95v1.4h-0.95zM1273.6 288.4h0.95v1.4h-0.95zM1274.8 288.4h0.95v1.4h-0.95zM1275.9 288.4h0.95v1.4h-0.95zM1277.0 288.4h0.95v1.4h-0.95zM1278.1 288.4h0.95v1.4h-0.95zM1279.2 288.4h0.95v1.4h-0.95zM1280.4 288.4h0.95v1.4h-0.95zM1281.5 288.4h0.95v1.4h-0.95zM1282.6 288.4h0.95v1.4h-0.95zM1283.7 288.4h0.95v1.4h-0.95zM1284.8 288.4h0.95v1.4h-0.95zM1273.6 302.4h0.95v1.4h-0.95zM1274.8 302.4h0.95v1.4h-0.95zM1275.9 302.4h0.95v1.4h-0.95zM1277.0 302.4h0.95v1.4h-0.95zM1269.2 304.4h0.95v1.4h-0.95zM1270.3 304.4h0.95v1.4h-0.95zM1271.4 304.4h0.95v1.4h-0.95zM1282.6 304.4h0.95v1.4h-0.95zM1283.7 304.4h0.95v1.4h-0.95zM1284.8 304.4h0.95v1.4h-0.95zM1286.0 304.4h0.95v1.4h-0.95zM1287.1 304.4h0.95v1.4h-0.95zM1288.2 304.4h0.95v1.4h-0.95zM1289.3 304.4h0.95v1.4h-0.95zM1290.4 304.4h0.95v1.4h-0.95zM1291.6 304.4h0.95v1.4h-0.95zM1292.7 304.4h0.95v1.4h-0.95zM1293.8 304.4h0.95v1.4h-0.95zM1273.6 306.4h0.95v1.4h-0.95zM1274.8 306.4h0.95v1.4h-0.95zM1275.9 306.4h0.95v1.4h-0.95zM1277.0 306.4h0.95v1.4h-0.95zM1278.1 306.4h0.95v1.4h-0.95zM1279.2 306.4h0.95v1.4h-0.95zM1280.4 306.4h0.95v1.4h-0.95zM1281.5 306.4h0.95v1.4h-0.95zM1282.6 306.4h0.95v1.4h-0.95zM1283.7 306.4h0.95v1.4h-0.95zM1284.8 306.4h0.95v1.4h-0.95zM1273.6 308.4h0.95v1.4h-0.95zM1274.8 308.4h0.95v1.4h-0.95zM1275.9 308.4h0.95v1.4h-0.95zM1277.0 308.4h0.95v1.4h-0.95zM1278.1 308.4h0.95v1.4h-0.95zM1279.2 308.4h0.95v1.4h-0.95zM1273.6 320.4h0.95v1.4h-0.95zM1274.8 320.4h0.95v1.4h-0.95zM1275.9 320.4h0.95v1.4h-0.95zM1277.0 320.4h0.95v1.4h-0.95zM1278.1 320.4h0.95v1.4h-0.95zM1279.2 320.4h0.95v1.4h-0.95zM1293.8 320.4h0.95v1.4h-0.95zM1294.9 320.4h0.95v1.4h-0.95zM1296.0 320.4h0.95v1.4h-0.95zM1297.2 320.4h0.95v1.4h-0.95zM1298.3 320.4h0.95v1.4h-0.95zM1299.4 320.4h0.95v1.4h-0.95zM1277.0 322.4h0.95v1.4h-0.95zM1278.1 322.4h0.95v1.4h-0.95zM1279.2 322.4h0.95v1.4h-0.95zM1280.4 322.4h0.95v1.4h-0.95zM1281.5 322.4h0.95v1.4h-0.95zM1282.6 322.4h0.95v1.4h-0.95zM1283.7 322.4h0.95v1.4h-0.95zM1284.8 322.4h0.95v1.4h-0.95zM1286.0 322.4h0.95v1.4h-0.95zM1287.1 322.4h0.95v1.4h-0.95zM1288.2 322.4h0.95v1.4h-0.95z"/><path fill="#6a9955" d="M1260.2 112.4h0.95v1.4h-0.95zM1261.3 112.4h0.95v1.4h-0.95zM1262.4 112.4h0.95v1.4h-0.95zM1261.3 114.4h0.95v1.4h-0.95zM1263.6 114.4h0.95v1.4h-0.95zM1264.7 114.4h0.95v1.4h-0.95zM1265.8 114.4h0.95v1.4h-0.95zM1266.9 114.4h0.95v1.4h-0.95zM1268.0 114.4h0.95v1.4h-0.95zM1269.2 114.4h0.95v1.4h-0.95zM1270.3 114.4h0.95v1.4h-0.95zM1261.3 116.4h0.95v1.4h-0.95zM1262.4 116.4h0.95v1.4h-0.95z"/><path fill="#dcdcaa" d="M1286.0 128.4h0.95v1.4h-0.95zM1287.1 128.4h0.95v1.4h-0.95zM1288.2 128.4h0.95v1.4h-0.95zM1289.3 128.4h0.95v1.4h-0.95zM1272.5 132.4h0.95v1.4h-0.95zM1273.6 132.4h0.95v1.4h-0.95zM1274.8 132.4h0.95v1.4h-0.95zM1275.9 132.4h0.95v1.4h-0.95zM1277.0 132.4h0.95v1.4h-0.95zM1278.1 132.4h0.95v1.4h-0.95zM1279.2 132.4h0.95v1.4h-0.95zM1279.2 138.4h0.95v1.4h-0.95zM1280.4 138.4h0.95v1.4h-0.95zM1281.5 138.4h0.95v1.4h-0.95zM1282.6 138.4h0.95v1.4h-0.95zM1283.7 138.4h0.95v1.4h-0.95zM1284.8 138.4h0.95v1.4h-0.95zM1286.0 138.4h0.95v1.4h-0.95zM1287.1 138.4h0.95v1.4h-0.95zM1288.2 138.4h0.95v1.4h-0.95zM1289.3 138.4h0.95v1.4h-0.95zM1290.4 138.4h0.95v1.4h-0.95zM1274.8 140.4h0.95v1.4h-0.95zM1275.9 140.4h0.95v1.4h-0.95zM1277.0 140.4h0.95v1.4h-0.95zM1278.1 140.4h0.95v1.4h-0.95zM1279.2 140.4h0.95v1.4h-0.95zM1280.4 140.4h0.95v1.4h-0.95zM1281.5 140.4h0.95v1.4h-0.95zM1279.2 146.4h0.95v1.4h-0.95zM1280.4 146.4h0.95v1.4h-0.95zM1281.5 146.4h0.95v1.4h-0.95zM1282.6 146.4h0.95v1.4h-0.95zM1283.7 146.4h0.95v1.4h-0.95zM1284.8 146.4h0.95v1.4h-0.95zM1286.0 146.4h0.95v1.4h-0.95zM1294.9 162.4h0.95v1.4h-0.95zM1296.0 162.4h0.95v1.4h-0.95zM1297.2 162.4h0.95v1.4h-0.95zM1298.3 162.4h0.95v1.4h-0.95zM1299.4 162.4h0.95v1.4h-0.95zM1300.5 162.4h0.95v1.4h-0.95zM1301.6 162.4h0.95v1.4h-0.95zM1302.8 162.4h0.95v1.4h-0.95zM1303.9 162.4h0.95v1.4h-0.95zM1305.0 162.4h0.95v1.4h-0.95zM1291.6 168.4h0.95v1.4h-0.95zM1292.7 168.4h0.95v1.4h-0.95zM1293.8 168.4h0.95v1.4h-0.95zM1294.9 168.4h0.95v1.4h-0.95zM1296.0 168.4h0.95v1.4h-0.95zM1297.2 168.4h0.95v1.4h-0.95zM1279.2 170.4h0.95v1.4h-0.95zM1280.4 170.4h0.95v1.4h-0.95zM1281.5 170.4h0.95v1.4h-0.95zM1282.6 170.4h0.95v1.4h-0.95zM1283.7 170.4h0.95v1.4h-0.95zM1284.8 170.4h0.95v1.4h-0.95zM1286.0 170.4h0.95v1.4h-0.95zM1291.6 176.4h0.95v1.4h-0.95zM1292.7 176.4h0.95v1.4h-0.95zM1293.8 176.4h0.95v1.4h-0.95zM1294.9 176.4h0.95v1.4h-0.95zM1296.0 176.4h0.95v1.4h-0.95zM1297.2 176.4h0.95v1.4h-0.95zM1298.3 176.4h0.95v1.4h-0.95zM1299.4 176.4h0.95v1.4h-0.95zM1283.7 184.4h0.95v1.4h-0.95zM1284.8 184.4h0.95v1.4h-0.95zM1286.0 184.4h0.95v1.4h-0.95zM1287.1 184.4h0.95v1.4h-0.95zM1288.2 184.4h0.95v1.4h-0.95zM1289.3 184.4h0.95v1.4h-0.95zM1290.4 184.4h0.95v1.4h-0.95zM1291.6 184.4h0.95v1.4h-0.95zM1292.7 184.4h0.95v1.4h-0.95zM1283.7 190.4h0.95v1.4h-0.95zM1284.8 190.4h0.95v1.4h-0.95zM1286.0 190.4h0.95v1.4h-0.95zM1287.1 190.4h0.95v1.4h-0.95zM1288.2 190.4h0.95v1.4h-0.95zM1289.3 190.4h0.95v1.4h-0.95zM1290.4 190.4h0.95v1.4h-0.95zM1291.6 190.4h0.95v1.4h-0.95zM1283.7 196.4h0.95v1.4h-0.95zM1284.8 196.4h0.95v1.4h-0.95zM1286.0 196.4h0.95v1.4h-0.95zM1287.1 196.4h0.95v1.4h-0.95zM1288.2 196.4h0.95v1.4h-0.95zM1289.3 196.4h0.95v1.4h-0.95zM1290.4 196.4h0.95v1.4h-0.95zM1291.6 196.4h0.95v1.4h-0.95zM1292.7 196.4h0.95v1.4h-0.95zM1293.8 196.4h0.95v1.4h-0.95zM1294.9 196.4h0.95v1.4h-0.95zM1296.0 196.4h0.95v1.4h-0.95zM1283.7 202.4h0.95v1.4h-0.95zM1284.8 202.4h0.95v1.4h-0.95zM1286.0 202.4h0.95v1.4h-0.95zM1287.1 202.4h0.95v1.4h-0.95zM1288.2 202.4h0.95v1.4h-0.95zM1291.6 208.4h0.95v1.4h-0.95zM1292.7 208.4h0.95v1.4h-0.95zM1293.8 208.4h0.95v1.4h-0.95zM1294.9 208.4h0.95v1.4h-0.95zM1296.0 208.4h0.95v1.4h-0.95zM1297.2 208.4h0.95v1.4h-0.95zM1298.3 208.4h0.95v1.4h-0.95zM1299.4 208.4h0.95v1.4h-0.95zM1300.5 208.4h0.95v1.4h-0.95zM1301.6 208.4h0.95v1.4h-0.95zM1302.8 208.4h0.95v1.4h-0.95zM1303.9 208.4h0.95v1.4h-0.95zM1305.0 208.4h0.95v1.4h-0.95zM1306.1 208.4h0.95v1.4h-0.95zM1307.2 208.4h0.95v1.4h-0.95zM1308.4 208.4h0.95v1.4h-0.95zM1309.5 208.4h0.95v1.4h-0.95zM1283.7 210.4h0.95v1.4h-0.95zM1284.8 210.4h0.95v1.4h-0.95zM1286.0 210.4h0.95v1.4h-0.95zM1287.1 210.4h0.95v1.4h-0.95zM1288.2 210.4h0.95v1.4h-0.95zM1289.3 210.4h0.95v1.4h-0.95zM1290.4 210.4h0.95v1.4h-0.95zM1279.2 220.4h0.95v1.4h-0.95zM1280.4 220.4h0.95v1.4h-0.95zM1281.5 220.4h0.95v1.4h-0.95zM1282.6 220.4h0.95v1.4h-0.95zM1283.7 220.4h0.95v1.4h-0.95zM1284.8 220.4h0.95v1.4h-0.95zM1286.0 220.4h0.95v1.4h-0.95zM1287.1 220.4h0.95v1.4h-0.95zM1288.2 220.4h0.95v1.4h-0.95zM1289.3 220.4h0.95v1.4h-0.95zM1290.4 220.4h0.95v1.4h-0.95zM1291.6 220.4h0.95v1.4h-0.95zM1308.4 226.4h0.95v1.4h-0.95zM1309.5 226.4h0.95v1.4h-0.95zM1310.6 226.4h0.95v1.4h-0.95zM1311.7 226.4h0.95v1.4h-0.95zM1320.7 228.4h0.95v1.4h-0.95zM1321.8 228.4h0.95v1.4h-0.95zM1322.9 228.4h0.95v1.4h-0.95zM1311.7 234.4h0.95v1.4h-0.95zM1312.8 234.4h0.95v1.4h-0.95zM1314.0 234.4h0.95v1.4h-0.95zM1315.1 234.4h0.95v1.4h-0.95zM1274.8 238.4h0.95v1.4h-0.95zM1275.9 238.4h0.95v1.4h-0.95zM1277.0 238.4h0.95v1.4h-0.95zM1278.1 238.4h0.95v1.4h-0.95zM1279.2 238.4h0.95v1.4h-0.95zM1279.2 246.4h0.95v1.4h-0.95zM1280.4 246.4h0.95v1.4h-0.95zM1281.5 246.4h0.95v1.4h-0.95zM1282.6 246.4h0.95v1.4h-0.95zM1283.7 246.4h0.95v1.4h-0.95zM1282.6 248.4h0.95v1.4h-0.95zM1283.7 248.4h0.95v1.4h-0.95zM1284.8 248.4h0.95v1.4h-0.95zM1286.0 248.4h0.95v1.4h-0.95zM1287.1 248.4h0.95v1.4h-0.95zM1288.2 248.4h0.95v1.4h-0.95zM1289.3 248.4h0.95v1.4h-0.95zM1290.4 248.4h0.95v1.4h-0.95zM1291.6 248.4h0.95v1.4h-0.95zM1292.7 248.4h0.95v1.4h-0.95zM1293.8 248.4h0.95v1.4h-0.95zM1294.9 248.4h0.95v1.4h-0.95zM1296.0 248.4h0.95v1.4h-0.95zM1297.2 248.4h0.95v1.4h-0.95zM1298.3 248.4h0.95v1.4h-0.95zM1299.4 248.4h0.95v1.4h-0.95zM1300.5 248.4h0.95v1.4h-0.95zM1279.2 254.4h0.95v1.4h-0.95zM1280.4 254.4h0.95v1.4h-0.95zM1281.5 254.4h0.95v1.4h-0.95zM1282.6 254.4h0.95v1.4h-0.95zM1283.7 254.4h0.95v1.4h-0.95zM1284.8 254.4h0.95v1.4h-0.95zM1286.0 254.4h0.95v1.4h-0.95zM1287.1 254.4h0.95v1.4h-0.95zM1296.0 256.4h0.95v1.4h-0.95zM1297.2 256.4h0.95v1.4h-0.95zM1298.3 256.4h0.95v1.4h-0.95zM1299.4 256.4h0.95v1.4h-0.95zM1300.5 256.4h0.95v1.4h-0.95zM1301.6 256.4h0.95v1.4h-0.95zM1302.8 256.4h0.95v1.4h-0.95zM1303.9 256.4h0.95v1.4h-0.95zM1305.0 256.4h0.95v1.4h-0.95zM1306.1 256.4h0.95v1.4h-0.95zM1290.4 260.4h0.95v1.4h-0.95zM1291.6 260.4h0.95v1.4h-0.95zM1292.7 260.4h0.95v1.4h-0.95zM1293.8 260.4h0.95v1.4h-0.95zM1294.9 260.4h0.95v1.4h-0.95zM1296.0 260.4h0.95v1.4h-0.95zM1307.2 260.4h0.95v1.4h-0.95zM1308.4 260.4h0.95v1.4h-0.95zM1309.5 260.4h0.95v1.4h-0.95zM1310.6 260.4h0.95v1.4h-0.95zM1311.7 260.4h0.95v1.4h-0.95zM1312.8 260.4h0.95v1.4h-0.95zM1314.0 260.4h0.95v1.4h-0.95zM1315.1 260.4h0.95v1.4h-0.95zM1287.1 262.4h0.95v1.4h-0.95zM1288.2 262.4h0.95v1.4h-0.95zM1289.3 262.4h0.95v1.4h-0.95zM1290.4 262.4h0.95v1.4h-0.95zM1291.6 262.4h0.95v1.4h-0.95zM1292.7 262.4h0.95v1.4h-0.95zM1293.8 262.4h0.95v1.4h-0.95zM1294.9 262.4h0.95v1.4h-0.95zM1296.0 262.4h0.95v1.4h-0.95zM1297.2 262.4h0.95v1.4h-0.95zM1298.3 262.4h0.95v1.4h-0.95zM1299.4 262.4h0.95v1.4h-0.95zM1300.5 262.4h0.95v1.4h-0.95zM1301.6 262.4h0.95v1.4h-0.95zM1302.8 262.4h0.95v1.4h-0.95zM1303.9 262.4h0.95v1.4h-0.95zM1305.0 262.4h0.95v1.4h-0.95zM1287.1 266.4h0.95v1.4h-0.95zM1288.2 266.4h0.95v1.4h-0.95zM1289.3 266.4h0.95v1.4h-0.95zM1290.4 266.4h0.95v1.4h-0.95zM1291.6 266.4h0.95v1.4h-0.95zM1292.7 266.4h0.95v1.4h-0.95zM1293.8 266.4h0.95v1.4h-0.95zM1294.9 266.4h0.95v1.4h-0.95zM1296.0 266.4h0.95v1.4h-0.95zM1297.2 266.4h0.95v1.4h-0.95zM1298.3 266.4h0.95v1.4h-0.95zM1299.4 266.4h0.95v1.4h-0.95zM1300.5 266.4h0.95v1.4h-0.95zM1301.6 266.4h0.95v1.4h-0.95zM1302.8 266.4h0.95v1.4h-0.95zM1303.9 266.4h0.95v1.4h-0.95zM1305.0 266.4h0.95v1.4h-0.95zM1274.8 270.4h0.95v1.4h-0.95zM1275.9 270.4h0.95v1.4h-0.95zM1277.0 270.4h0.95v1.4h-0.95zM1278.1 270.4h0.95v1.4h-0.95zM1279.2 270.4h0.95v1.4h-0.95zM1280.4 270.4h0.95v1.4h-0.95zM1281.5 270.4h0.95v1.4h-0.95zM1279.2 276.4h0.95v1.4h-0.95zM1280.4 276.4h0.95v1.4h-0.95zM1281.5 276.4h0.95v1.4h-0.95zM1282.6 276.4h0.95v1.4h-0.95zM1283.7 276.4h0.95v1.4h-0.95zM1284.8 276.4h0.95v1.4h-0.95zM1286.0 276.4h0.95v1.4h-0.95zM1287.1 276.4h0.95v1.4h-0.95zM1288.2 276.4h0.95v1.4h-0.95zM1293.8 278.4h0.95v1.4h-0.95zM1294.9 278.4h0.95v1.4h-0.95zM1296.0 278.4h0.95v1.4h-0.95zM1297.2 278.4h0.95v1.4h-0.95zM1298.3 278.4h0.95v1.4h-0.95zM1299.4 278.4h0.95v1.4h-0.95zM1300.5 278.4h0.95v1.4h-0.95zM1301.6 278.4h0.95v1.4h-0.95zM1302.8 278.4h0.95v1.4h-0.95zM1303.9 278.4h0.95v1.4h-0.95zM1290.4 282.4h0.95v1.4h-0.95zM1291.6 282.4h0.95v1.4h-0.95zM1292.7 282.4h0.95v1.4h-0.95zM1287.1 284.4h0.95v1.4h-0.95zM1288.2 284.4h0.95v1.4h-0.95zM1289.3 284.4h0.95v1.4h-0.95zM1290.4 284.4h0.95v1.4h-0.95zM1291.6 284.4h0.95v1.4h-0.95zM1292.7 284.4h0.95v1.4h-0.95zM1293.8 284.4h0.95v1.4h-0.95zM1294.9 284.4h0.95v1.4h-0.95zM1296.0 284.4h0.95v1.4h-0.95zM1297.2 284.4h0.95v1.4h-0.95zM1298.3 284.4h0.95v1.4h-0.95zM1299.4 284.4h0.95v1.4h-0.95zM1300.5 284.4h0.95v1.4h-0.95zM1301.6 284.4h0.95v1.4h-0.95zM1302.8 284.4h0.95v1.4h-0.95zM1303.9 284.4h0.95v1.4h-0.95zM1305.0 284.4h0.95v1.4h-0.95zM1287.1 288.4h0.95v1.4h-0.95zM1288.2 288.4h0.95v1.4h-0.95zM1289.3 288.4h0.95v1.4h-0.95zM1290.4 288.4h0.95v1.4h-0.95zM1291.6 288.4h0.95v1.4h-0.95zM1292.7 288.4h0.95v1.4h-0.95zM1293.8 288.4h0.95v1.4h-0.95zM1294.9 288.4h0.95v1.4h-0.95zM1296.0 288.4h0.95v1.4h-0.95zM1297.2 288.4h0.95v1.4h-0.95zM1298.3 288.4h0.95v1.4h-0.95zM1299.4 288.4h0.95v1.4h-0.95zM1300.5 288.4h0.95v1.4h-0.95zM1301.6 288.4h0.95v1.4h-0.95zM1302.8 288.4h0.95v1.4h-0.95zM1303.9 288.4h0.95v1.4h-0.95zM1305.0 288.4h0.95v1.4h-0.95zM1274.8 296.4h0.95v1.4h-0.95zM1275.9 296.4h0.95v1.4h-0.95zM1277.0 296.4h0.95v1.4h-0.95zM1278.1 296.4h0.95v1.4h-0.95zM1279.2 296.4h0.95v1.4h-0.95zM1280.4 296.4h0.95v1.4h-0.95zM1281.5 296.4h0.95v1.4h-0.95zM1279.2 302.4h0.95v1.4h-0.95zM1280.4 302.4h0.95v1.4h-0.95zM1281.5 302.4h0.95v1.4h-0.95zM1282.6 302.4h0.95v1.4h-0.95zM1283.7 302.4h0.95v1.4h-0.95zM1296.0 304.4h0.95v1.4h-0.95zM1297.2 304.4h0.95v1.4h-0.95zM1298.3 304.4h0.95v1.4h-0.95zM1299.4 304.4h0.95v1.4h-0.95zM1300.5 304.4h0.95v1.4h-0.95zM1301.6 304.4h0.95v1.4h-0.95zM1302.8 304.4h0.95v1.4h-0.95zM1303.9 304.4h0.95v1.4h-0.95zM1305.0 304.4h0.95v1.4h-0.95zM1306.1 304.4h0.95v1.4h-0.95zM1307.2 304.4h0.95v1.4h-0.95zM1308.4 304.4h0.95v1.4h-0.95zM1309.5 304.4h0.95v1.4h-0.95zM1310.6 304.4h0.95v1.4h-0.95zM1311.7 304.4h0.95v1.4h-0.95zM1312.8 304.4h0.95v1.4h-0.95zM1314.0 304.4h0.95v1.4h-0.95zM1287.1 306.4h0.95v1.4h-0.95zM1288.2 306.4h0.95v1.4h-0.95zM1289.3 306.4h0.95v1.4h-0.95zM1290.4 306.4h0.95v1.4h-0.95zM1291.6 306.4h0.95v1.4h-0.95zM1292.7 306.4h0.95v1.4h-0.95zM1293.8 306.4h0.95v1.4h-0.95zM1294.9 306.4h0.95v1.4h-0.95zM1296.0 306.4h0.95v1.4h-0.95zM1297.2 306.4h0.95v1.4h-0.95zM1298.3 306.4h0.95v1.4h-0.95zM1299.4 306.4h0.95v1.4h-0.95zM1300.5 306.4h0.95v1.4h-0.95zM1301.6 306.4h0.95v1.4h-0.95zM1302.8 306.4h0.95v1.4h-0.95zM1303.9 306.4h0.95v1.4h-0.95zM1305.0 306.4h0.95v1.4h-0.95zM1281.5 308.4h0.95v1.4h-0.95zM1282.6 308.4h0.95v1.4h-0.95zM1283.7 308.4h0.95v1.4h-0.95zM1284.8 308.4h0.95v1.4h-0.95zM1279.2 312.4h0.95v1.4h-0.95zM1280.4 312.4h0.95v1.4h-0.95zM1281.5 312.4h0.95v1.4h-0.95zM1282.6 312.4h0.95v1.4h-0.95zM1283.7 312.4h0.95v1.4h-0.95zM1284.8 312.4h0.95v1.4h-0.95zM1286.0 312.4h0.95v1.4h-0.95zM1281.5 320.4h0.95v1.4h-0.95zM1282.6 320.4h0.95v1.4h-0.95zM1283.7 320.4h0.95v1.4h-0.95zM1284.8 320.4h0.95v1.4h-0.95zM1286.0 320.4h0.95v1.4h-0.95zM1287.1 320.4h0.95v1.4h-0.95zM1288.2 320.4h0.95v1.4h-0.95zM1289.3 320.4h0.95v1.4h-0.95zM1290.4 320.4h0.95v1.4h-0.95zM1291.6 320.4h0.95v1.4h-0.95zM1290.4 322.4h0.95v1.4h-0.95zM1291.6 322.4h0.95v1.4h-0.95zM1292.7 322.4h0.95v1.4h-0.95zM1293.8 322.4h0.95v1.4h-0.95zM1294.9 322.4h0.95v1.4h-0.95zM1296.0 322.4h0.95v1.4h-0.95zM1297.2 322.4h0.95v1.4h-0.95zM1298.3 322.4h0.95v1.4h-0.95zM1299.4 322.4h0.95v1.4h-0.95zM1300.5 322.4h0.95v1.4h-0.95zM1301.6 322.4h0.95v1.4h-0.95zM1302.8 322.4h0.95v1.4h-0.95zM1303.9 322.4h0.95v1.4h-0.95zM1305.0 322.4h0.95v1.4h-0.95zM1306.1 322.4h0.95v1.4h-0.95z"/><path fill="#ce9178" d="M1283.7 149.0h0.95v0.8h-0.95zM1284.8 148.4h0.95v1.4h-0.95zM1286.0 148.4h0.95v1.4h-0.95zM1287.1 148.4h0.95v1.4h-0.95zM1288.2 148.4h0.95v1.4h-0.95zM1289.3 149.0h0.95v0.8h-0.95zM1290.4 148.4h0.95v1.4h-0.95zM1291.6 148.4h0.95v1.4h-0.95zM1292.7 149.0h0.95v0.8h-0.95zM1277.0 151.0h0.95v0.8h-0.95zM1278.1 150.4h0.95v1.4h-0.95zM1279.2 150.4h0.95v1.4h-0.95zM1280.4 150.4h0.95v1.4h-0.95zM1281.5 150.4h0.95v1.4h-0.95zM1282.6 150.4h0.95v1.4h-0.95zM1283.7 150.4h0.95v1.4h-0.95zM1284.8 150.4h0.95v1.4h-0.95zM1286.0 150.4h0.95v1.4h-0.95zM1287.1 150.4h0.95v1.4h-0.95zM1288.2 150.4h0.95v1.4h-0.95zM1289.3 150.4h0.95v1.4h-0.95zM1290.4 150.4h0.95v1.4h-0.95zM1291.6 150.4h0.95v1.4h-0.95zM1292.7 150.4h0.95v1.4h-0.95zM1293.8 150.4h0.95v1.4h-0.95zM1294.9 150.4h0.95v1.4h-0.95zM1296.0 150.4h0.95v1.4h-0.95zM1297.2 150.4h0.95v1.4h-0.95zM1298.3 150.4h0.95v1.4h-0.95zM1299.4 150.4h0.95v1.4h-0.95zM1300.5 150.4h0.95v1.4h-0.95zM1301.6 150.4h0.95v1.4h-0.95zM1302.8 150.4h0.95v1.4h-0.95zM1303.9 150.4h0.95v1.4h-0.95zM1305.0 150.4h0.95v1.4h-0.95zM1306.1 151.0h0.95v0.8h-0.95zM1277.0 153.0h0.95v0.8h-0.95zM1278.1 152.4h0.95v1.4h-0.95zM1279.2 152.4h0.95v1.4h-0.95zM1281.5 152.4h0.95v1.4h-0.95zM1282.6 152.4h0.95v1.4h-0.95zM1283.7 152.4h0.95v1.4h-0.95zM1284.8 152.4h0.95v1.4h-0.95zM1286.0 152.4h0.95v1.4h-0.95zM1288.2 152.4h0.95v1.4h-0.95zM1289.3 152.4h0.95v1.4h-0.95zM1290.4 152.4h0.95v1.4h-0.95zM1291.6 152.4h0.95v1.4h-0.95zM1292.7 152.4h0.95v1.4h-0.95zM1293.8 152.4h0.95v1.4h-0.95zM1294.9 153.0h0.95v0.8h-0.95zM1277.0 155.0h0.95v0.8h-0.95zM1278.1 154.4h0.95v1.4h-0.95zM1279.2 154.4h0.95v1.4h-0.95zM1281.5 154.4h0.95v1.4h-0.95zM1282.6 154.4h0.95v1.4h-0.95zM1283.7 154.4h0.95v1.4h-0.95zM1284.8 154.4h0.95v1.4h-0.95zM1286.0 154.4h0.95v1.4h-0.95zM1288.2 154.4h0.95v1.4h-0.95zM1289.3 154.4h0.95v1.4h-0.95zM1290.4 154.4h0.95v1.4h-0.95zM1291.6 154.4h0.95v1.4h-0.95zM1292.7 154.4h0.95v1.4h-0.95zM1293.8 155.0h0.95v0.8h-0.95zM1277.0 157.0h0.95v0.8h-0.95zM1278.1 156.4h0.95v1.4h-0.95zM1279.2 156.4h0.95v1.4h-0.95zM1281.5 156.4h0.95v1.4h-0.95zM1282.6 156.4h0.95v1.4h-0.95zM1283.7 156.4h0.95v1.4h-0.95zM1284.8 156.4h0.95v1.4h-0.95zM1286.0 156.4h0.95v1.4h-0.95zM1287.1 156.4h0.95v1.4h-0.95zM1288.2 156.4h0.95v1.4h-0.95zM1289.3 156.4h0.95v1.4h-0.95zM1290.4 156.4h0.95v1.4h-0.95zM1291.6 157.0h0.95v0.8h-0.95zM1277.0 159.0h0.95v0.8h-0.95zM1278.1 158.4h0.95v1.4h-0.95zM1279.2 158.4h0.95v1.4h-0.95zM1281.5 158.4h0.95v1.4h-0.95zM1282.6 158.4h0.95v1.4h-0.95zM1283.7 158.4h0.95v1.4h-0.95zM1284.8 158.4h0.95v1.4h-0.95zM1286.0 158.4h0.95v1.4h-0.95zM1287.1 158.4h0.95v1.4h-0.95zM1288.2 158.4h0.95v1.4h-0.95zM1289.3 159.0h0.95v0.8h-0.95zM1282.6 167.0h0.95v0.8h-0.95zM1283.7 166.4h0.95v1.4h-0.95zM1284.8 167.0h0.95v0.8h-0.95zM1299.4 169.0h0.95v0.8h-0.95zM1300.5 169.0h0.95v0.8h-0.95zM1318.4 209.0h0.95v0.8h-0.95zM1319.6 208.4h0.95v1.4h-0.95zM1320.7 208.4h0.95v1.4h-0.95zM1321.8 208.4h0.95v1.4h-0.95zM1322.9 208.4h0.95v1.4h-0.95zM1324.0 208.4h0.95v1.4h-0.95zM1325.2 208.4h0.95v1.4h-0.95zM1327.4 208.4h0.95v1.4h-0.95zM1328.5 208.4h0.95v1.4h-0.95zM1329.6 208.4h0.95v1.4h-0.95zM1330.8 208.4h0.95v1.4h-0.95zM1331.9 208.4h0.95v1.4h-0.95zM1334.1 208.4h0.95v1.4h-0.95zM1335.2 208.4h0.95v1.4h-0.95zM1336.4 208.4h0.95v1.4h-0.95zM1337.5 208.4h0.95v1.4h-0.95zM1338.6 208.4h0.95v1.4h-0.95zM1339.7 208.4h0.95v1.4h-0.95zM1340.8 208.4h0.95v1.4h-0.95zM1342.0 208.4h0.95v1.4h-0.95zM1343.1 209.0h0.95v0.8h-0.95zM1283.7 223.0h0.95v0.8h-0.95zM1284.8 222.4h0.95v1.4h-0.95zM1286.0 222.4h0.95v1.4h-0.95zM1287.1 222.4h0.95v1.4h-0.95zM1288.2 222.4h0.95v1.4h-0.95zM1289.3 222.4h0.95v1.4h-0.95zM1290.4 222.4h0.95v1.4h-0.95zM1291.6 222.4h0.95v1.4h-0.95zM1293.8 222.4h0.95v1.4h-0.95zM1294.9 222.4h0.95v1.4h-0.95zM1296.0 222.4h0.95v1.4h-0.95zM1297.2 222.4h0.95v1.4h-0.95zM1298.3 222.4h0.95v1.4h-0.95zM1299.4 222.4h0.95v1.4h-0.95zM1300.5 222.4h0.95v1.4h-0.95zM1301.6 223.0h0.95v0.8h-0.95zM1302.8 223.0h0.95v0.8h-0.95zM1277.0 225.0h0.95v0.8h-0.95zM1278.1 224.4h0.95v1.4h-0.95zM1279.2 224.4h0.95v1.4h-0.95zM1280.4 224.4h0.95v1.4h-0.95zM1281.5 224.4h0.95v1.4h-0.95zM1282.6 224.4h0.95v1.4h-0.95zM1283.7 224.4h0.95v1.4h-0.95zM1284.8 224.4h0.95v1.4h-0.95zM1286.0 224.4h0.95v1.4h-0.95zM1287.1 224.4h0.95v1.4h-0.95zM1288.2 224.4h0.95v1.4h-0.95zM1289.3 224.4h0.95v1.4h-0.95zM1290.4 224.4h0.95v1.4h-0.95zM1291.6 224.4h0.95v1.4h-0.95zM1292.7 224.4h0.95v1.4h-0.95zM1293.8 224.4h0.95v1.4h-0.95zM1294.9 224.4h0.95v1.4h-0.95zM1296.0 224.4h0.95v1.4h-0.95zM1297.2 224.4h0.95v1.4h-0.95zM1298.3 224.4h0.95v1.4h-0.95zM1299.4 224.4h0.95v1.4h-0.95zM1300.5 224.4h0.95v1.4h-0.95zM1301.6 224.4h0.95v1.4h-0.95zM1302.8 224.4h0.95v1.4h-0.95zM1303.9 224.4h0.95v1.4h-0.95zM1305.0 224.4h0.95v1.4h-0.95zM1306.1 224.4h0.95v1.4h-0.95zM1307.2 224.4h0.95v1.4h-0.95zM1308.4 225.0h0.95v0.8h-0.95zM1281.5 229.0h0.95v0.8h-0.95zM1283.7 228.4h0.95v1.4h-0.95zM1286.0 229.0h0.95v0.8h-0.95zM1294.9 229.0h0.95v0.8h-0.95zM1297.2 228.4h0.95v1.4h-0.95zM1299.4 229.0h0.95v0.8h-0.95zM1330.8 229.0h0.95v0.8h-0.95zM1331.9 228.4h0.95v1.4h-0.95zM1333.0 228.4h0.95v1.4h-0.95zM1334.1 229.0h0.95v0.8h-0.95zM1281.5 233.0h0.95v0.8h-0.95zM1282.6 232.4h0.95v1.4h-0.95zM1283.7 232.4h0.95v1.4h-0.95zM1284.8 232.4h0.95v1.4h-0.95zM1286.0 232.4h0.95v1.4h-0.95zM1287.1 232.4h0.95v1.4h-0.95zM1288.2 232.4h0.95v1.4h-0.95zM1289.3 232.4h0.95v1.4h-0.95zM1290.4 232.4h0.95v1.4h-0.95zM1291.6 232.4h0.95v1.4h-0.95zM1292.7 232.4h0.95v1.4h-0.95zM1293.8 232.4h0.95v1.4h-0.95zM1294.9 232.4h0.95v1.4h-0.95zM1296.0 232.4h0.95v1.4h-0.95zM1297.2 232.4h0.95v1.4h-0.95zM1298.3 232.4h0.95v1.4h-0.95zM1299.4 232.4h0.95v1.4h-0.95zM1300.5 232.4h0.95v1.4h-0.95zM1301.6 232.4h0.95v1.4h-0.95zM1302.8 232.4h0.95v1.4h-0.95zM1303.9 232.4h0.95v1.4h-0.95zM1305.0 232.4h0.95v1.4h-0.95zM1306.1 232.4h0.95v1.4h-0.95zM1307.2 232.4h0.95v1.4h-0.95zM1308.4 232.4h0.95v1.4h-0.95zM1309.5 232.4h0.95v1.4h-0.95zM1310.6 232.4h0.95v1.4h-0.95zM1311.7 232.4h0.95v1.4h-0.95zM1312.8 233.0h0.95v0.8h-0.95zM1281.5 235.0h0.95v0.8h-0.95zM1282.6 234.4h0.95v1.4h-0.95zM1283.7 234.4h0.95v1.4h-0.95zM1284.8 234.4h0.95v1.4h-0.95zM1286.0 234.4h0.95v1.4h-0.95zM1287.1 234.4h0.95v1.4h-0.95zM1288.2 234.4h0.95v1.4h-0.95zM1290.4 235.0h0.95v0.8h-0.95zM1321.8 235.0h0.95v0.8h-0.95zM1322.9 234.4h0.95v1.4h-0.95zM1324.0 234.4h0.95v1.4h-0.95zM1325.2 234.4h0.95v1.4h-0.95zM1326.3 234.4h0.95v1.4h-0.95zM1327.4 234.4h0.95v1.4h-0.95zM1328.5 235.0h0.95v0.8h-0.95zM1308.4 257.0h0.95v0.8h-0.95zM1309.5 256.4h0.95v1.4h-0.95zM1310.6 256.4h0.95v1.4h-0.95zM1311.7 256.4h0.95v1.4h-0.95zM1312.8 256.4h0.95v1.4h-0.95zM1314.0 256.4h0.95v1.4h-0.95zM1315.1 256.4h0.95v1.4h-0.95zM1316.2 256.4h0.95v1.4h-0.95zM1317.3 256.4h0.95v1.4h-0.95zM1318.4 256.4h0.95v1.4h-0.95zM1320.7 256.4h0.95v1.4h-0.95zM1321.8 256.4h0.95v1.4h-0.95zM1322.9 256.4h0.95v1.4h-0.95zM1324.0 256.4h0.95v1.4h-0.95zM1325.2 256.4h0.95v1.4h-0.95zM1327.4 256.4h0.95v1.4h-0.95zM1328.5 256.4h0.95v1.4h-0.95zM1330.8 257.0h0.95v0.8h-0.95zM1333.0 257.0h0.95v0.8h-0.95zM1314.0 263.0h0.95v0.8h-0.95zM1315.1 262.4h0.95v1.4h-0.95zM1316.2 262.4h0.95v1.4h-0.95zM1317.3 262.4h0.95v1.4h-0.95zM1318.4 262.4h0.95v1.4h-0.95zM1319.6 262.4h0.95v1.4h-0.95zM1321.8 262.4h0.95v1.4h-0.95zM1322.9 262.4h0.95v1.4h-0.95zM1324.0 262.4h0.95v1.4h-0.95zM1325.2 262.4h0.95v1.4h-0.95zM1326.3 262.4h0.95v1.4h-0.95zM1327.4 262.4h0.95v1.4h-0.95zM1328.5 262.4h0.95v1.4h-0.95zM1329.6 263.0h0.95v0.8h-0.95zM1314.0 267.0h0.95v0.8h-0.95zM1315.1 266.4h0.95v1.4h-0.95zM1316.2 266.4h0.95v1.4h-0.95zM1317.3 266.4h0.95v1.4h-0.95zM1318.4 266.4h0.95v1.4h-0.95zM1319.6 266.4h0.95v1.4h-0.95zM1320.7 266.4h0.95v1.4h-0.95zM1321.8 266.4h0.95v1.4h-0.95zM1322.9 266.4h0.95v1.4h-0.95zM1324.0 266.4h0.95v1.4h-0.95zM1326.3 266.4h0.95v1.4h-0.95zM1327.4 266.4h0.95v1.4h-0.95zM1328.5 266.4h0.95v1.4h-0.95zM1329.6 266.4h0.95v1.4h-0.95zM1330.8 266.4h0.95v1.4h-0.95zM1333.0 266.4h0.95v1.4h-0.95zM1334.1 266.4h0.95v1.4h-0.95zM1335.2 266.4h0.95v1.4h-0.95zM1336.4 266.4h0.95v1.4h-0.95zM1337.5 266.4h0.95v1.4h-0.95zM1338.6 266.4h0.95v1.4h-0.95zM1339.7 266.4h0.95v1.4h-0.95zM1340.8 266.4h0.95v1.4h-0.95zM1342.0 266.4h0.95v1.4h-0.95zM1343.1 266.4h0.95v1.4h-0.95zM1344.2 267.0h0.95v0.8h-0.95zM1306.1 279.0h0.95v0.8h-0.95zM1307.2 278.4h0.95v1.4h-0.95zM1308.4 278.4h0.95v1.4h-0.95zM1309.5 278.4h0.95v1.4h-0.95zM1310.6 278.4h0.95v1.4h-0.95zM1311.7 278.4h0.95v1.4h-0.95zM1312.8 278.4h0.95v1.4h-0.95zM1314.0 278.4h0.95v1.4h-0.95zM1316.2 278.4h0.95v1.4h-0.95zM1317.3 278.4h0.95v1.4h-0.95zM1319.6 278.4h0.95v1.4h-0.95zM1320.7 278.4h0.95v1.4h-0.95zM1321.8 278.4h0.95v1.4h-0.95zM1322.9 278.4h0.95v1.4h-0.95zM1324.0 278.4h0.95v1.4h-0.95zM1326.3 279.0h0.95v0.8h-0.95zM1328.5 279.0h0.95v0.8h-0.95zM1314.0 285.0h0.95v0.8h-0.95zM1315.1 284.4h0.95v1.4h-0.95zM1316.2 284.4h0.95v1.4h-0.95zM1317.3 284.4h0.95v1.4h-0.95zM1318.4 284.4h0.95v1.4h-0.95zM1319.6 284.4h0.95v1.4h-0.95zM1321.8 284.4h0.95v1.4h-0.95zM1322.9 284.4h0.95v1.4h-0.95zM1324.0 284.4h0.95v1.4h-0.95zM1325.2 284.4h0.95v1.4h-0.95zM1326.3 284.4h0.95v1.4h-0.95zM1327.4 284.4h0.95v1.4h-0.95zM1328.5 284.4h0.95v1.4h-0.95zM1329.6 285.0h0.95v0.8h-0.95zM1314.0 289.0h0.95v0.8h-0.95zM1315.1 288.4h0.95v1.4h-0.95zM1316.2 288.4h0.95v1.4h-0.95zM1317.3 288.4h0.95v1.4h-0.95zM1318.4 288.4h0.95v1.4h-0.95zM1319.6 288.4h0.95v1.4h-0.95zM1321.8 288.4h0.95v1.4h-0.95zM1322.9 288.4h0.95v1.4h-0.95zM1324.0 288.4h0.95v1.4h-0.95zM1325.2 288.4h0.95v1.4h-0.95zM1326.3 288.4h0.95v1.4h-0.95zM1327.4 288.4h0.95v1.4h-0.95zM1328.5 288.4h0.95v1.4h-0.95zM1329.6 288.4h0.95v1.4h-0.95zM1330.8 288.4h0.95v1.4h-0.95zM1331.9 288.4h0.95v1.4h-0.95zM1333.0 289.0h0.95v0.8h-0.95zM1322.9 305.0h0.95v0.8h-0.95zM1324.0 304.4h0.95v1.4h-0.95zM1325.2 304.4h0.95v1.4h-0.95zM1326.3 304.4h0.95v1.4h-0.95zM1327.4 304.4h0.95v1.4h-0.95zM1328.5 304.4h0.95v1.4h-0.95zM1329.6 305.0h0.95v0.8h-0.95zM1314.0 307.0h0.95v0.8h-0.95zM1315.1 306.4h0.95v1.4h-0.95zM1316.2 306.4h0.95v1.4h-0.95zM1317.3 306.4h0.95v1.4h-0.95zM1318.4 306.4h0.95v1.4h-0.95zM1319.6 306.4h0.95v1.4h-0.95zM1320.7 306.4h0.95v1.4h-0.95zM1322.9 306.4h0.95v1.4h-0.95zM1324.0 306.4h0.95v1.4h-0.95zM1325.2 306.4h0.95v1.4h-0.95zM1326.3 306.4h0.95v1.4h-0.95zM1327.4 306.4h0.95v1.4h-0.95zM1328.5 306.4h0.95v1.4h-0.95zM1329.6 306.4h0.95v1.4h-0.95zM1331.9 306.4h0.95v1.4h-0.95zM1333.0 306.4h0.95v1.4h-0.95zM1334.1 306.4h0.95v1.4h-0.95zM1335.2 306.4h0.95v1.4h-0.95zM1336.4 306.4h0.95v1.4h-0.95zM1337.5 306.4h0.95v1.4h-0.95zM1338.6 306.4h0.95v1.4h-0.95zM1339.7 307.0h0.95v0.8h-0.95z"/><path fill="#c586c0" d="M1269.2 164.4h0.95v1.4h-0.95zM1270.3 164.4h0.95v1.4h-0.95zM1271.4 168.4h0.95v1.4h-0.95zM1272.5 168.4h0.95v1.4h-0.95zM1273.6 168.4h0.95v1.4h-0.95zM1274.8 168.4h0.95v1.4h-0.95zM1277.0 168.4h0.95v1.4h-0.95zM1278.1 168.4h0.95v1.4h-0.95zM1269.2 180.4h0.95v1.4h-0.95zM1270.3 180.4h0.95v1.4h-0.95zM1271.4 180.4h0.95v1.4h-0.95zM1272.5 180.4h0.95v1.4h-0.95zM1273.6 180.4h0.95v1.4h-0.95zM1274.8 180.4h0.95v1.4h-0.95zM1273.6 182.4h0.95v1.4h-0.95zM1274.8 182.4h0.95v1.4h-0.95zM1275.9 182.4h0.95v1.4h-0.95zM1277.0 182.4h0.95v1.4h-0.95zM1278.1 186.4h0.95v1.4h-0.95zM1279.2 186.4h0.95v1.4h-0.95zM1280.4 186.4h0.95v1.4h-0.95zM1281.5 186.4h0.95v1.4h-0.95zM1282.6 186.4h0.95v1.4h-0.95zM1273.6 188.4h0.95v1.4h-0.95zM1274.8 188.4h0.95v1.4h-0.95zM1275.9 188.4h0.95v1.4h-0.95zM1277.0 188.4h0.95v1.4h-0.95zM1278.1 192.4h0.95v1.4h-0.95zM1279.2 192.4h0.95v1.4h-0.95zM1280.4 192.4h0.95v1.4h-0.95zM1281.5 192.4h0.95v1.4h-0.95zM1282.6 192.4h0.95v1.4h-0.95zM1273.6 194.4h0.95v1.4h-0.95zM1274.8 194.4h0.95v1.4h-0.95zM1275.9 194.4h0.95v1.4h-0.95zM1277.0 194.4h0.95v1.4h-0.95zM1278.1 198.4h0.95v1.4h-0.95zM1279.2 198.4h0.95v1.4h-0.95zM1280.4 198.4h0.95v1.4h-0.95zM1281.5 198.4h0.95v1.4h-0.95zM1282.6 198.4h0.95v1.4h-0.95zM1273.6 200.4h0.95v1.4h-0.95zM1274.8 200.4h0.95v1.4h-0.95zM1275.9 200.4h0.95v1.4h-0.95zM1277.0 200.4h0.95v1.4h-0.95zM1278.1 204.4h0.95v1.4h-0.95zM1279.2 204.4h0.95v1.4h-0.95zM1280.4 204.4h0.95v1.4h-0.95zM1281.5 204.4h0.95v1.4h-0.95zM1282.6 204.4h0.95v1.4h-0.95zM1273.6 206.4h0.95v1.4h-0.95zM1274.8 206.4h0.95v1.4h-0.95zM1275.9 206.4h0.95v1.4h-0.95zM1277.0 206.4h0.95v1.4h-0.95zM1278.1 206.4h0.95v1.4h-0.95zM1279.2 206.4h0.95v1.4h-0.95zM1280.4 206.4h0.95v1.4h-0.95zM1278.1 212.4h0.95v1.4h-0.95zM1279.2 212.4h0.95v1.4h-0.95zM1280.4 212.4h0.95v1.4h-0.95zM1281.5 212.4h0.95v1.4h-0.95zM1282.6 212.4h0.95v1.4h-0.95zM1269.2 226.4h0.95v1.4h-0.95zM1270.3 226.4h0.95v1.4h-0.95zM1271.4 226.4h0.95v1.4h-0.95zM1269.2 258.4h0.95v1.4h-0.95zM1270.3 258.4h0.95v1.4h-0.95zM1271.4 264.4h0.95v1.4h-0.95zM1272.5 264.4h0.95v1.4h-0.95zM1273.6 264.4h0.95v1.4h-0.95zM1274.8 264.4h0.95v1.4h-0.95zM1269.2 280.4h0.95v1.4h-0.95zM1270.3 280.4h0.95v1.4h-0.95zM1271.4 286.4h0.95v1.4h-0.95zM1272.5 286.4h0.95v1.4h-0.95zM1273.6 286.4h0.95v1.4h-0.95zM1274.8 286.4h0.95v1.4h-0.95zM1269.2 306.4h0.95v1.4h-0.95zM1270.3 306.4h0.95v1.4h-0.95zM1271.4 310.4h0.95v1.4h-0.95zM1272.5 310.4h0.95v1.4h-0.95zM1273.6 310.4h0.95v1.4h-0.95zM1274.8 310.4h0.95v1.4h-0.95zM1269.2 322.4h0.95v1.4h-0.95zM1270.3 322.4h0.95v1.4h-0.95zM1271.4 322.4h0.95v1.4h-0.95zM1272.5 322.4h0.95v1.4h-0.95zM1273.6 322.4h0.95v1.4h-0.95zM1274.8 322.4h0.95v1.4h-0.95z"/></g></svg><div class="a" style="left:1349px;top:104px;width:1px;height:408px;background:#444444"></div><div class="a" style="left:1361px;top:130px;width:4px;height:6px;background:#cca700"></div><div class="a" style="left:1361px;top:391px;width:4px;height:6px;background:#cca700"></div><div class="a" style="left:1351px;top:298px;width:14px;height:2px;background:#5a5a5a"></div><div class="a" style="left:364px;top:511px;width:1001px;height:191px;background:#1e1e1e;border-top:1px solid #454545"></div><div class="t" style="left:388px;top:528px;font-size:12.3px;color:#9a9a9a;letter-spacing:-0.45px">PROBLEMS</div><div class="a" style="left:462px;top:523px;width:21px;height:21px;border-radius:50%;background:#4d4d4d"></div><div class="t" style="left:468px;top:527px;font-size:13px;color:#ffffff">2</div><div class="t" style="left:507px;top:528px;font-size:12.3px;color:#e7e7e7;letter-spacing:-0.15px">TERMINAL</div><div class="a" style="left:507px;top:548px;width:62px;height:2px;background:#e7e7e7"></div><div class="t" style="left:593px;top:528px;font-size:12.3px;color:#9a9a9a;letter-spacing:-0.6px">REFACTOR PREVIEW</div><div class="a" style="left:948px;top:519px;width:204px;height:28px;background:#3c3c3c"></div><div class="t" style="left:959px;top:527.5px;font-size:14.9px;color:#f0f0f0">4: Java Process Console</div><svg style="left:1131px;top:528px" width="12" height="8"><path d="M1 1L6 6L11 1" fill="none" stroke="#c5c5c5" stroke-width="1.3"/></svg><svg style="left:1172px;top:525px" width="17" height="16"><path d="M8.5 0V16M0 8H17" stroke="#c5c5c5" stroke-width="1.5"/></svg><svg style="left:1211px;top:525px" width="17" height="16"><rect x="0.8" y="0.8" width="15.4" height="14.4" rx="1.5" fill="none" stroke="#c5c5c5" stroke-width="1.5"/><path d="M8.5 1V15" stroke="#c5c5c5" stroke-width="1.5"/></svg><svg style="left:1250px;top:524px" width="14" height="17"><path d="M0 3.5H14M4.5 3.5V1H9.5V3.5M1.8 3.5L2.6 15.5H11.4L12.2 3.5M5 6.5V13M7 6.5V13M9 6.5V13" fill="none" stroke="#c5c5c5" stroke-width="1.4"/></svg><svg style="left:1289px;top:528px" width="14" height="9"><path d="M1 8L7 2L13 8" fill="none" stroke="#c5c5c5" stroke-width="1.5"/></svg><svg style="left:1328px;top:527px" width="12" height="12"><path d="M1 1L11 11M11 1L1 11" stroke="#c5c5c5" stroke-width="1.5"/></svg><div class="t" style="left:388px;top:580px;height:20px;line-height:20px;font-family:'Liberation Mono',monospace;font-size:15px;letter-spacing:0px"><span style="color:#cccccc">PS D:\DEV\JAVA\PROJECTS\BIREYSEL\2. Ders&gt;  </span><span style="color:#e5e510">d:</span><span style="color:#cccccc">;</span><span style="color:#e5e510"> cd</span><span style="color:#1aaddb"> &#x27;d:\DEV\JAVA\PROJECTS\BIREYSEL\2. Ders&#x27;</span><span style="color:#cccccc">; &amp; </span><span style="color:#1aaddb">&#x27;c:\Users\Adm</span></div><div class="t" style="left:388px;top:600px;height:20px;line-height:20px;font-family:'Liberation Mono',monospace;font-size:15px;letter-spacing:0px"><span style="color:#1aaddb">inistrator\.vscode\extensions\vscjava.vscode-java-debug-0.30.0\scripts\launcher.bat&#x27; &#x27;C:\Program Files\Ado</span></div><div class="t" style="left:388px;top:620px;height:20px;line-height:20px;font-family:'Liberation Mono',monospace;font-size:15px;letter-spacing:0px"><span style="color:#1aaddb">ptOpenJDK\jdk-11.0.9.101-hotspot\bin\java.exe&#x27; &#x27;-Dfile.encoding=UTF-8&#x27; &#x27;-cp&#x27; &#x27;C:\Users\Administrator\AppDa</span></div><div class="t" style="left:388px;top:640px;height:20px;line-height:20px;font-family:'Liberation Mono',monospace;font-size:15px;letter-spacing:0px"><span style="color:#1aaddb">ta\Roaming\Code\User\workspaceStorage\0d66d492b85715b6c56251821588cab0\redhat.java\jdt_ws\2. Ders_73e619cd</span></div><div class="t" style="left:388px;top:660px;height:20px;line-height:20px;font-family:'Liberation Mono',monospace;font-size:15px;letter-spacing:0px"><span style="color:#1aaddb">\bin&#x27; &#x27;KayitListesi&#x27;</span></div><div class="a" style="left:388px;top:680px;width:9px;height:20px;border:1px solid #d0d0d0"></div><div class="a" style="left:0;top:702px;width:1365px;height:26px;background:#007acc"></div><svg style="left:19.5px;top:707px" width="15" height="15"><circle cx="7.5" cy="7.5" r="6.6" fill="none" stroke="#fff" stroke-width="1.3"/><path d="M4.8 4.8L10.2 10.2M10.2 4.8L4.8 10.2" stroke="#fff" stroke-width="1.3"/></svg><div class="t" style="left:39px;font-size:13.4px;color:#ffffff;top:709.5px">0</div><svg style="left:52px;top:707px" width="16" height="15"><path d="M8 1L15 14H1Z" fill="none" stroke="#fff" stroke-width="1.3"/><path d="M8 5.5V10M8 11.5V12.8" stroke="#fff" stroke-width="1.4"/></svg><div class="t" style="left:71px;font-size:13.4px;color:#ffffff;top:709.5px">2</div><svg style="left:98px;top:707px" width="17" height="16"><path d="M7 1L15.5 7L8 12M7 1V6" fill="none" stroke="#fff" stroke-width="1.3"/><g fill="none" stroke="#fff" stroke-width="1.1"><ellipse cx="4.8" cy="11.5" rx="2.6" ry="3.1" fill="#007acc"/><path d="M2.2 10.5H7.4M0.5 9L2.2 10.5M9 9L7.4 10.5M0.5 12.5H2M7.6 12.5H9M0.5 15.5L2.2 14M9 15.5L7.4 14"/></g></svg><div class="t" style="left:809px;font-size:13.4px;color:#ffffff;top:709.5px;transform:scaleX(1.01);transform-origin:0 0">Ln 63, Col 22</div><div class="t" style="left:909px;font-size:13.4px;color:#ffffff;top:709.5px;transform:scaleX(0.985);transform-origin:0 0">Spaces: 4</div><div class="t" style="left:987px;font-size:13.4px;color:#ffffff;top:709.5px;transform:scaleX(1.0);transform-origin:0 0">UTF-8</div><div class="t" style="left:1044px;font-size:13.4px;color:#ffffff;top:709.5px;transform:scaleX(0.9);transform-origin:0 0">CRLF</div><div class="t" style="left:1094px;font-size:13.4px;color:#ffffff;top:709.5px;transform:scaleX(0.97);transform-origin:0 0">Java</div><div class="t" style="left:1177px;font-size:13.4px;color:#ffffff;top:709.5px;transform:scaleX(0.96);transform-origin:0 0">JavaSE-11</div><svg style="left:1141px;top:707px" width="17" height="15"><path d="M1 7H4.5V14H1Z M4.5 7L8 1.5Q9.5 1.5 9.5 3.5L9 6H14.5Q16 6.5 15.5 8L14 13Q13.5 14 12.5 14H4.5" fill="none" stroke="#fff" stroke-width="1.2"/></svg><svg style="left:1259px;top:707px" width="17" height="17"><circle cx="8" cy="8" r="7" fill="none" stroke="#fff" stroke-width="1.3"/><path d="M8 6.5V12.5M8 3.5V5" stroke="#fff" stroke-width="1.5"/></svg><svg style="left:1294px;top:706px" width="19" height="18"><path d="M6 1H18V10H12" fill="none" stroke="#fff" stroke-width="1.2"/><circle cx="6" cy="8" r="3" fill="none" stroke="#fff" stroke-width="1.2"/><path d="M0.8 17Q1.5 12 6 12Q10.5 12 11.2 17" fill="none" stroke="#fff" stroke-width="1.2"/></svg><svg style="left:1333px;top:706px" width="16" height="17"><path d="M2 13V7.5Q2 3 7 2.5Q12 3 12 7.5V13H1M14 13H12M5.5 15Q7 17 8.5 15" fill="none" stroke="#fff" stroke-width="1.2"/><circle cx="12.5" cy="3" r="2.8" fill="#fff"/></svg><div class="a" style="left:552px;top:253px;width:263px;height:215px;background:#eeeeee;border:1px solid #6a6a6a"></div><div class="a" style="left:553px;top:254px;width:261px;height:29px;background:#ffffff"></div><div class="t" style="left:560px;top:262px;font-size:12.2px;color:#000000;letter-spacing:-0.35px">Message</div><svg style="left:793px;top:261px" width="12" height="12"><path d="M0.5 0.5L11.5 11.5M11.5 0.5L0.5 11.5" stroke="#111" stroke-width="1.1"/></svg><svg style="left:560px;top:291px" width="34" height="34"><circle cx="17.5" cy="17.8" r="13" fill="rgba(0,0,0,0.12)"/><circle cx="16.1" cy="15.8" r="12.6" fill="#ccccff" stroke="#666699" stroke-width="1.3"/><rect x="13.5" y="7.5" width="5" height="3.5" fill="#666699" stroke="#fff" stroke-width="1"/><rect x="13.5" y="11.8" width="5" height="11.6" fill="#666699" stroke="#fff" stroke-width="1"/></svg><div class="t" style="left:609px;top:296.6px;font-size:11.8px;font-weight:bold;color:#333333">Öğrenci Listesi:</div><div class="t" style="left:609px;top:315.4px;font-size:11.8px;font-weight:bold;color:#333333;letter-spacing:0.17px">************************</div><div class="t" style="left:612.3px;top:334.5px;font-size:11.8px;font-weight:bold;color:#333333">[ 0 ] Mehmet Kasım Sular</div><div class="t" style="left:612.3px;top:353.3px;font-size:11.8px;font-weight:bold;color:#333333">[ 1 ] Özde Vera Sular</div><div class="t" style="left:609px;top:389.4px;font-size:11.8px;font-weight:bold;color:#333333;letter-spacing:0.17px">************************</div><div class="t" style="left:609px;top:408.4px;font-size:11.8px;font-weight:bold;color:#333333">Toplam 2kayıt</div><div class="a" style="left:663px;top:430px;width:39px;height:26px;border:2px solid #7a8a99;background:linear-gradient(#dde8f3 0%,#ffffff 30%,#dbe6f1 60%,#c6d8e9 100%)"></div><div class="a" style="left:673px;top:434px;width:19px;height:18px;border:1px solid #a3b8cc"></div><div class="t" style="left:674.5px;top:438.5px;font-size:12px;font-weight:bold;color:#222;letter-spacing:-0.3px">OK</div><div class="a" style="left:0;top:728px;width:1365px;height:39px;background:#202020"></div><svg style="left:16px;top:739px" width="17" height="17"><path fill="#fff" d="M0 2.4L7 1.4V8H0ZM8 1.3L17 0V8H8ZM0 9H7V15.6L0 14.6ZM8 9H17V17L8 15.7Z"/></svg><svg style="left:63px;top:740px" width="18" height="18"><circle cx="11" cy="7" r="5.6" fill="none" stroke="#fff" stroke-width="1.4"/><path d="M7 11L1 17" stroke="#fff" stroke-width="1.6"/></svg><svg style="left:111px;top:741px" width="18" height="14"><rect x="2.5" y="2.5" width="10" height="9" fill="none" stroke="#fff" stroke-width="1.3"/><path d="M0.5 0.5H14.5M0.5 13.5H14.5M16.5 1V13" stroke="#fff" stroke-width="1.2"/></svg><svg style="left:160px;top:737px" width="23" height="21"><path d="M7 0L22 3V15L7 12Z" fill="#3fb6f5"/><path d="M7 0L22 3V5L7 2Z" fill="#8fd8ff"/><path d="M1 17L9 14L21 17L13 20Z" fill="#d8d8d8"/><path d="M13 14L17 13L20 14L16 15Z" fill="#bbb"/></svg><div class="a" style="left:208px;top:736px;width:24px;height:23px;background:#bf0000"></div><div class="t" style="left:210px;top:739px;font-size:18px;font-weight:bold;font-style:italic;color:#fff;letter-spacing:-1.5px">Fz</div><svg style="left:258px;top:737px" width="23" height="23" viewBox="0 0 24 24"><circle cx="12" cy="12" r="11.5" fill="#db4437"/><path d="M12 12L2 6.2A11.5 11.5 0 0 0 12 23.5Z" fill="#0f9d58"/><path d="M12 12H23.5A11.5 11.5 0 0 1 9.5 23.3Z" fill="#f4b400"/><circle cx="12" cy="12" r="5.3" fill="#fff"/><circle cx="12" cy="12" r="4.2" fill="#4285f4"/></svg><svg style="left:306px;top:737px" width="24" height="23"><path d="M1.5 9V7.5Q1.5 1.5 7.5 1.5H16.5Q22.5 1.5 22.5 7.5V9M1.5 13V15.5Q1.5 21.5 7.5 21.5H16.5Q22.5 21.5 22.5 15.5V13" fill="none" stroke="#ff1fa5" stroke-width="3"/><path d="M6.5 5.5L8.5 16.5L12 10L15.5 16.5L17.5 5.5" fill="none" stroke="#ff1fa5" stroke-width="2.6" stroke-linejoin="round"/></svg><svg style="left:355px;top:737px" width="30" height="28"><path d="M0 8L11.5 0L23 8V21H0Z" fill="#2a8ae0"/><path d="M0 8L11.5 15L23 8V21H0Z" fill="#41a5ee"/><circle cx="20" cy="21" r="6.6" fill="#2b2b2b" stroke="#999" stroke-width="1"/><text x="20" y="25.3" font-family="Liberation Sans" font-size="11" font-weight="bold" fill="#fff" text-anchor="middle">7</text></svg><svg style="left:403px;top:736px" width="26" height="25"><path d="M5 1L20 3L17 20L2 18Z" fill="#e84a4a"/><path d="M6 1L20 3L19.3 6L5.2 4Z" fill="#c7c7c7"/><path d="M12 17H17M14.5 14.5V19.5" stroke="#7ad334" stroke-width="2.2"/><path d="M18 18H23M20.5 15.5V20.5" stroke="#f5d020" stroke-width="2.2"/></svg><svg style="left:453px;top:736px" width="26" height="25"><ellipse cx="8" cy="4" rx="7" ry="3" fill="#d8c24a"/><rect x="1" y="4" width="14" height="10" fill="#b59d2a"/><ellipse cx="17" cy="11" rx="7" ry="3" fill="#e6d35a"/><rect x="10" y="11" width="14" height="10" fill="#b9a12c"/><ellipse cx="17" cy="21" rx="7" ry="3" fill="#9c8520"/></svg><div class="a" style="left:503px;top:737px;width:21px;height:21px;background:#001e36;border:1.5px solid #31a8ff"></div><div class="t" style="left:505px;top:741px;font-size:12px;font-weight:bold;color:#31a8ff;letter-spacing:-0.5px">Ps</div><svg style="left:551px;top:736px" width="24" height="24"><circle cx="12" cy="12" r="10.5" fill="#1a1a1a" stroke="#74c236" stroke-width="2.4"/><path d="M6 17L14 7L18 11L9 18Z" fill="#e8e8e8"/></svg><div class="a" style="left:588px;top:728px;width:48px;height:39px;background:#3d3d3d"></div><div class="a" style="left:588px;top:765px;width:48px;height:2px;background:#76b9ed"></div><svg style="left:600px;top:737px" width="24" height="24" viewBox="0 0 100 100"><path fill="#0065a9" d="M96.5 10.8 75.9.9a6.2 6.2 0 0 0-7.1 1.2L29.4 38 12.2 25a4.2 4.2 0 0 0-5.3.2L1.4 30.2a4.2 4.2 0 0 0 0 6.2L16.3 50 1.4 63.6a4.2 4.2 0 0 0 0 6.2l5.5 5a4.2 4.2 0 0 0 5.3.2l17.2-13 39.4 35.9a6.2 6.2 0 0 0 7.1 1.2l20.6-9.9a6.2 6.2 0 0 0 3.5-5.6V16.4a6.2 6.2 0 0 0-3.5-5.6zM75 72.7 45.1 50 75 27.3z"/><path fill="#1f9cf0" d="M75.9.9a6.2 6.2 0 0 0-7.1 1.2L29.4 38 45.1 50 75 27.3v45.4L45.1 50 29.4 62l39.4 35.9a6.2 6.2 0 0 0 7.1 1.2l20.6-9.9a6.2 6.2 0 0 0 3.5-5.6V16.4a6.2 6.2 0 0 0-3.5-5.6z" opacity=".6"/></svg><svg style="left:649px;top:736px" width="24" height="24"><rect width="24" height="24" fill="#ee6b2f"/><circle cx="12" cy="12" r="5" fill="#fde9d0"/><path d="M3 7V3H7M17 3H21V7M21 17V21H17M7 21H3V17" fill="none" stroke="#fbd7b5" stroke-width="1.2"/></svg><svg style="left:698px;top:737px" width="23" height="23"><rect width="23" height="23" rx="7" fill="#4a8cff"/><rect x="4" y="7.5" width="10" height="8" rx="2" fill="#fff"/><path d="M14.5 10.5L19 8V15L14.5 12.5Z" fill="#fff"/></svg><svg style="left:746px;top:736px" width="25" height="25"><rect x="2" y="9" width="13" height="13" rx="2" fill="none" stroke="#f29111" stroke-width="3.2"/><rect x="9.5" y="2" width="13" height="13" rx="2" fill="none" stroke="#1ba1e2" stroke-width="3.2"/></svg><svg style="left:796px;top:736px" width="24" height="24"><rect width="24" height="24" rx="3" fill="#0e8ee9"/><circle cx="12" cy="12" r="9" fill="#fff"/><path d="M4.5 12L8 9V11H16V9L19.5 12L16 15V13H8V15Z" fill="#0e8ee9"/></svg><svg style="left:844px;top:737px" width="25" height="23"><circle cx="20" cy="4.5" r="3" fill="#7b83eb"/><rect x="15" y="8.5" width="9.5" height="10" rx="3" fill="#7b83eb"/><circle cx="14" cy="4" r="3.8" fill="#5059c9"/><rect x="8" y="8" width="12" height="14" rx="4" fill="#5059c9"/><rect x="0" y="5" width="13" height="13" rx="1.5" fill="#4b53bc"/><path d="M3 8H10M6.5 8V15" stroke="#fff" stroke-width="2"/></svg><svg style="left:894px;top:736px" width="24" height="24"><rect width="24" height="24" rx="2" fill="#80397b"/><path d="M5 3H15L19 7V21H5Z" fill="#fff"/><path d="M8 17L9 13L15 6L17 8L11 15Z" fill="#80397b"/></svg><svg style="left:943px;top:737px" width="23" height="22"><path d="M0 2H8L10 4H23V20H0Z" fill="#e8b93c"/><rect x="0" y="6" width="23" height="14" fill="#ffd35b"/><rect x="6" y="11" width="11" height="6" fill="#2f88d8"/><rect x="8" y="14" width="7" height="4" fill="#ffd35b"/></svg><div class="a" style="left:935px;top:765px;width:40px;height:2px;background:#76b9ed"></div><svg style="left:992px;top:736px" width="24" height="24"><path d="M0 0H19L24 5V24H0Z" fill="#f28a26"/><path d="M19 0V5H24" fill="#fcd2a5"/><circle cx="11" cy="9.5" r="5.5" fill="none" stroke="#fff" stroke-width="2"/><text x="12" y="21" font-family="Liberation Sans" font-size="5.5" font-weight="bold" fill="#fff" text-anchor="middle">PDF</text></svg><div class="a" style="left:984px;top:765px;width:40px;height:2px;background:#76b9ed"></div><svg style="left:1133px;top:744px" width="13" height="8"><path d="M1 7L6.5 1.5L12 7" fill="none" stroke="#fff" stroke-width="1.3"/></svg><svg style="left:1155px;top:742px" width="17" height="11"><path d="M3.5 11A3.5 3.5 0 0 1 3 4A5.5 5.5 0 0 1 13 3.5A3.8 3.8 0 0 1 13.5 11Z" fill="#d6d6d6"/></svg><svg style="left:1182px;top:742px" width="14" height="13"><path d="M1 12A11 11 0 0 1 12 1M3.5 12A8.5 8.5 0 0 1 12 3.5M6 12A6 6 0 0 1 12 6" fill="none" stroke="#fff" stroke-width="1.1"/><circle cx="10.5" cy="10.8" r="1.5" fill="#fff"/></svg><svg style="left:1203px;top:742px" width="17" height="13"><path d="M0.5 4H3.5L8 0.5V12.5L3.5 9H0.5Z" fill="none" stroke="#fff" stroke-width="1.1"/><path d="M10 4.5Q11.5 6.5 10 8.5M12 3Q14.5 6.5 12 10M14 1Q17.5 6.5 14 12" fill="none" stroke="#fff" stroke-width="1.1"/></svg><svg style="left:1227px;top:743px" width="17" height="11"><path d="M2 0V3M5 0V3M0.5 3H6.5V5Q6.5 7 3.5 7Q0.5 7 0.5 5ZM3.5 7V10" fill="none" stroke="#fff" stroke-width="1.1"/><rect x="6.5" y="3.5" width="9" height="6" fill="none" stroke="#fff" stroke-width="1.1"/><rect x="8" y="5" width="6" height="3" fill="#fff"/><rect x="15.5" y="5" width="1.3" height="3" fill="#fff"/></svg><div class="t" style="left:1266px;top:734px;font-size:11.5px;letter-spacing:-0.45px;color:#ffffff">15:10</div><div class="t" style="left:1254px;top:751px;font-size:11.5px;letter-spacing:-0.45px;color:#ffffff">10.01.2021</div><svg style="left:1324px;top:740px" width="28" height="25"><path d="M0.5 0.5H16.5V11.5H5L0.5 15Z" fill="#fff"/><path d="M3 3.5H14M3 6H14M3 8.5H11" stroke="#1c1c1c" stroke-width="1.2"/><circle cx="16.5" cy="15.8" r="8.5" fill="#1c1c1c" stroke="#aaa" stroke-width="1"/><text x="16.5" y="20" font-family="Liberation Sans" font-size="11.5" font-weight="bold" fill="#fff" text-anchor="middle">30</text></svg><div class="a" style="left:1360px;top:728px;width:1px;height:39px;background:#555"></div></body></html>
